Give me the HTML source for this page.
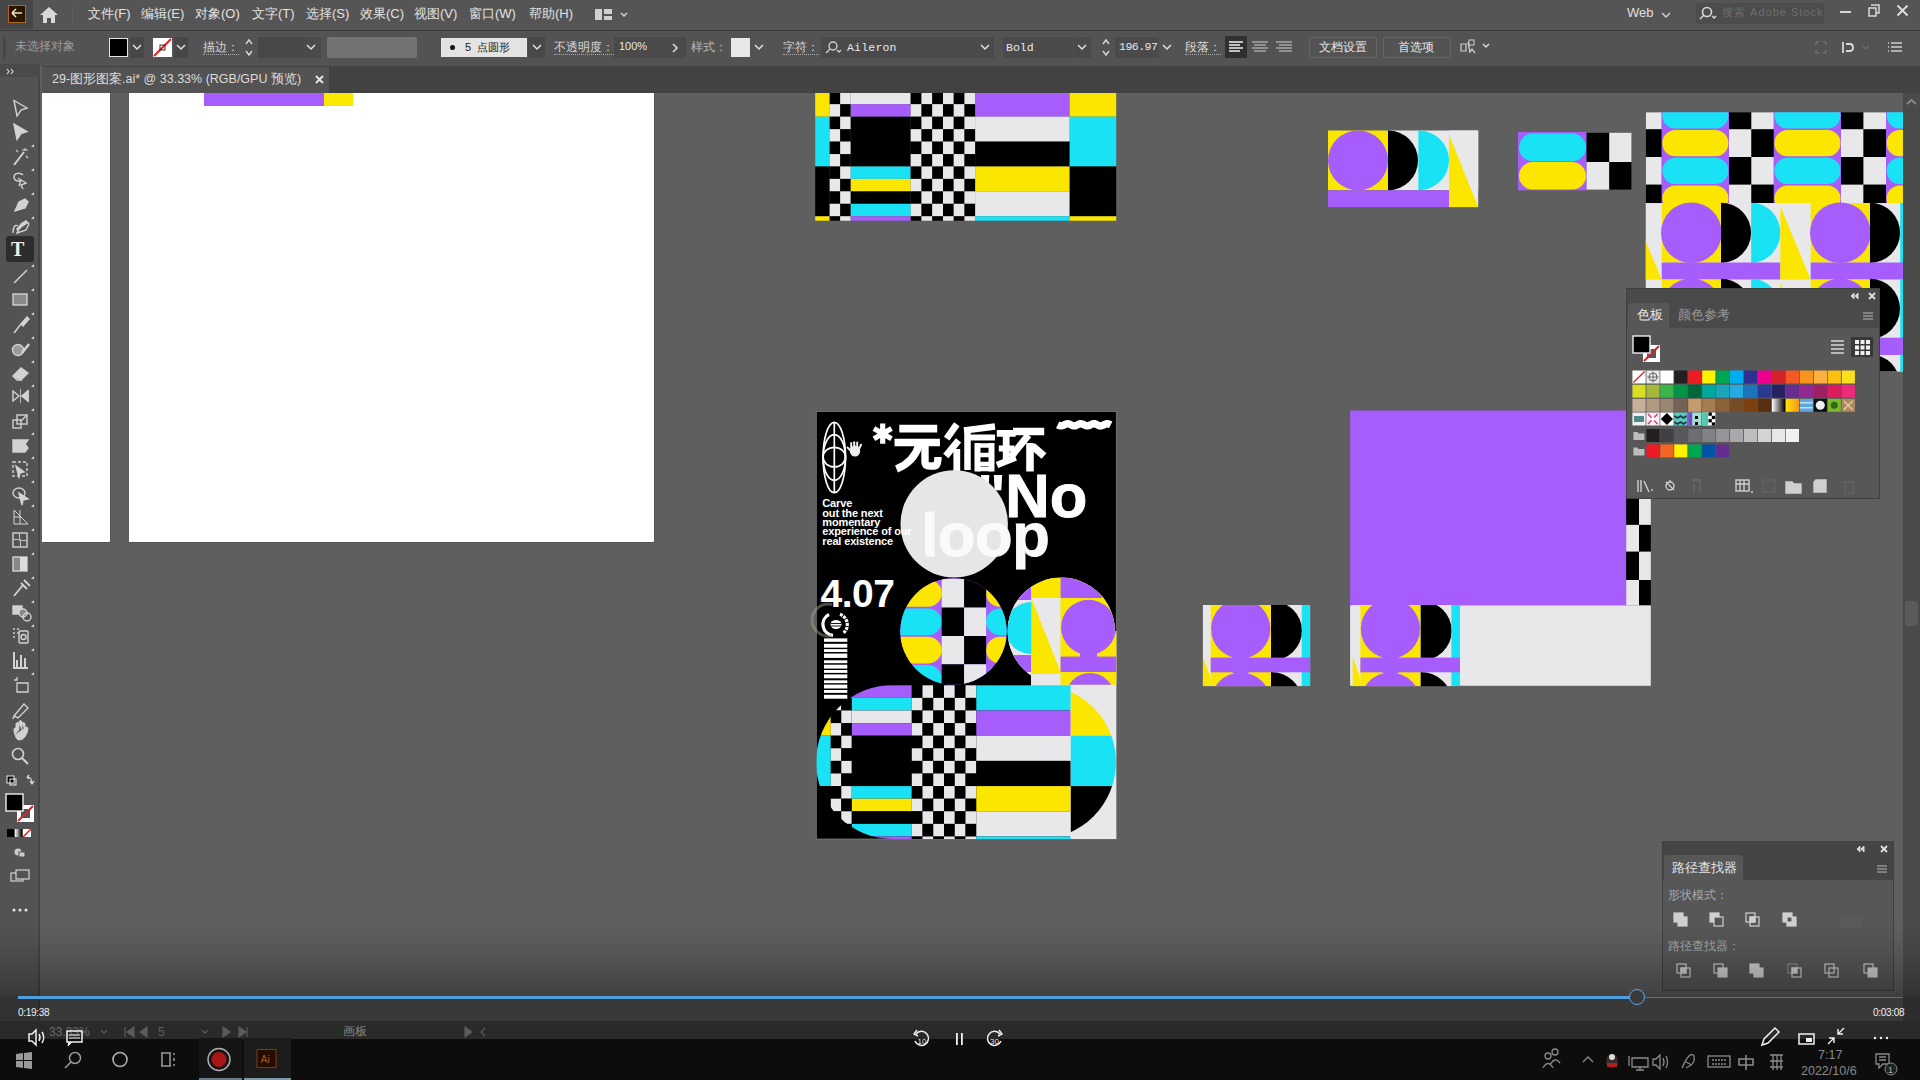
<!DOCTYPE html>
<html><head><meta charset="utf-8">
<style>
*{margin:0;padding:0;box-sizing:border-box}
html,body{width:1920px;height:1080px;overflow:hidden;background:#5f5f5f;font-family:"Liberation Sans",sans-serif;color:#d6d6d6}
.a{position:absolute}
.t{position:absolute;white-space:nowrap;line-height:1}
svg{position:absolute;left:0;top:0}
</style></head><body>
<!-- canvas artboards -->
<div class="a" style="left:42px;top:93px;width:68px;height:449px;background:#fff;box-shadow:1px 1px 0 #525252"></div>
<div class="a" style="left:129px;top:93px;width:525px;height:449px;background:#fff;box-shadow:1px 1px 0 #525252"></div>
<div class="a" style="left:204px;top:93px;width:120px;height:13px;background:#a65dfb"></div>
<div class="a" style="left:324px;top:93px;width:29px;height:13px;background:#fbe800"></div>

<!-- ART -->
<svg width="1920" height="1080" viewBox="0 0 1920 1080" id="art">
<defs>
<clipPath id="posterclip"><rect x="816.3" y="411.5" width="300" height="427.5"/></clipPath>
<clipPath id="pl"><circle cx="893" cy="762" r="77"/><rect x="893" y="600" width="300" height="260"/></clipPath>
<clipPath id="pr"><circle cx="1039" cy="762" r="77"/></clipPath>
<clipPath id="lc"><circle cx="953.5" cy="631.5" r="53.2"/></clipPath>
<clipPath id="rc"><circle cx="1061.3" cy="631.2" r="53.6"/><rect x="1061.3" y="631.2" width="56" height="53.6"/></clipPath>
<clipPath id="artC"><rect x="1645.8" y="112.2" width="257.3" height="259.3"/></clipPath>
<clipPath id="t1"><rect x="1202.7" y="605.0" width="107.6" height="81.2"/></clipPath>
<clipPath id="t2"><rect x="1352.4" y="605.0" width="107.6" height="81.2"/></clipPath>
</defs>
<g>
<rect x="815.2" y="66.9" width="14.5" height="24.9" fill="#000"/>
<rect x="815.2" y="91.8" width="14.5" height="24.9" fill="#fbe600"/>
<rect x="815.2" y="116.7" width="14.5" height="49.8" fill="#18e2f4"/>
<rect x="815.2" y="166.5" width="14.5" height="49.8" fill="#000"/>
<rect x="815.2" y="216.3" width="14.5" height="4.4" fill="#fbe600"/>
<rect x="850.5" y="66.9" width="60.2" height="12.5" fill="#a65dfb"/>
<rect x="850.5" y="79.4" width="60.2" height="12.5" fill="#18e2f4"/>
<rect x="850.5" y="91.8" width="60.2" height="12.4" fill="#e8e8ea"/>
<rect x="850.5" y="104.2" width="60.2" height="12.5" fill="#a65dfb"/>
<rect x="850.5" y="116.7" width="60.2" height="49.8" fill="#000"/>
<rect x="850.5" y="166.5" width="60.2" height="12.4" fill="#18e2f4"/>
<rect x="850.5" y="178.9" width="60.2" height="12.5" fill="#fbe600"/>
<rect x="850.5" y="191.4" width="60.2" height="12.4" fill="#000"/>
<rect x="850.5" y="203.8" width="60.2" height="12.4" fill="#18e2f4"/>
<rect x="850.5" y="216.3" width="60.2" height="4.4" fill="#a65dfb"/>
<rect x="829.7" y="66.9" width="10.5" height="12.5" fill="#000"/>
<rect x="840.2" y="66.9" width="10.3" height="12.5" fill="#e8e8ea"/>
<rect x="829.7" y="79.4" width="10.5" height="12.5" fill="#e8e8ea"/>
<rect x="840.2" y="79.4" width="10.3" height="12.5" fill="#000"/>
<rect x="829.7" y="91.8" width="10.5" height="12.4" fill="#000"/>
<rect x="840.2" y="91.8" width="10.3" height="12.4" fill="#e8e8ea"/>
<rect x="829.7" y="104.2" width="10.5" height="12.5" fill="#e8e8ea"/>
<rect x="840.2" y="104.2" width="10.3" height="12.5" fill="#000"/>
<rect x="829.7" y="116.7" width="10.5" height="12.5" fill="#000"/>
<rect x="840.2" y="116.7" width="10.3" height="12.5" fill="#e8e8ea"/>
<rect x="829.7" y="129.2" width="10.5" height="12.4" fill="#e8e8ea"/>
<rect x="840.2" y="129.2" width="10.3" height="12.4" fill="#000"/>
<rect x="829.7" y="141.6" width="10.5" height="12.5" fill="#000"/>
<rect x="840.2" y="141.6" width="10.3" height="12.5" fill="#e8e8ea"/>
<rect x="829.7" y="154.1" width="10.5" height="12.4" fill="#e8e8ea"/>
<rect x="840.2" y="154.1" width="10.3" height="12.4" fill="#000"/>
<rect x="829.7" y="166.5" width="10.5" height="12.4" fill="#000"/>
<rect x="840.2" y="166.5" width="10.3" height="12.4" fill="#e8e8ea"/>
<rect x="829.7" y="178.9" width="10.5" height="12.5" fill="#e8e8ea"/>
<rect x="840.2" y="178.9" width="10.3" height="12.5" fill="#000"/>
<rect x="829.7" y="191.4" width="10.5" height="12.4" fill="#000"/>
<rect x="840.2" y="191.4" width="10.3" height="12.4" fill="#e8e8ea"/>
<rect x="829.7" y="203.8" width="10.5" height="12.4" fill="#e8e8ea"/>
<rect x="840.2" y="203.8" width="10.3" height="12.4" fill="#000"/>
<rect x="829.7" y="216.3" width="10.5" height="4.4" fill="#000"/>
<rect x="840.2" y="216.3" width="10.3" height="4.4" fill="#e8e8ea"/>
</g>
<rect x="910.7" y="66.9" width="10.8" height="12.5" fill="#000"/>
<rect x="921.5" y="66.9" width="10.8" height="12.5" fill="#e8e8ea"/>
<rect x="932.2" y="66.9" width="10.8" height="12.5" fill="#000"/>
<rect x="943.0" y="66.9" width="10.8" height="12.5" fill="#e8e8ea"/>
<rect x="953.7" y="66.9" width="10.8" height="12.5" fill="#000"/>
<rect x="964.5" y="66.9" width="10.8" height="12.5" fill="#e8e8ea"/>
<rect x="910.7" y="79.4" width="10.8" height="12.5" fill="#e8e8ea"/>
<rect x="921.5" y="79.4" width="10.8" height="12.5" fill="#000"/>
<rect x="932.2" y="79.4" width="10.8" height="12.5" fill="#e8e8ea"/>
<rect x="943.0" y="79.4" width="10.8" height="12.5" fill="#000"/>
<rect x="953.7" y="79.4" width="10.8" height="12.5" fill="#e8e8ea"/>
<rect x="964.5" y="79.4" width="10.8" height="12.5" fill="#000"/>
<rect x="910.7" y="91.8" width="10.8" height="12.4" fill="#000"/>
<rect x="921.5" y="91.8" width="10.8" height="12.4" fill="#e8e8ea"/>
<rect x="932.2" y="91.8" width="10.8" height="12.4" fill="#000"/>
<rect x="943.0" y="91.8" width="10.8" height="12.4" fill="#e8e8ea"/>
<rect x="953.7" y="91.8" width="10.8" height="12.4" fill="#000"/>
<rect x="964.5" y="91.8" width="10.8" height="12.4" fill="#e8e8ea"/>
<rect x="910.7" y="104.2" width="10.8" height="12.5" fill="#e8e8ea"/>
<rect x="921.5" y="104.2" width="10.8" height="12.5" fill="#000"/>
<rect x="932.2" y="104.2" width="10.8" height="12.5" fill="#e8e8ea"/>
<rect x="943.0" y="104.2" width="10.8" height="12.5" fill="#000"/>
<rect x="953.7" y="104.2" width="10.8" height="12.5" fill="#e8e8ea"/>
<rect x="964.5" y="104.2" width="10.8" height="12.5" fill="#000"/>
<rect x="910.7" y="116.7" width="10.8" height="12.5" fill="#000"/>
<rect x="921.5" y="116.7" width="10.8" height="12.5" fill="#e8e8ea"/>
<rect x="932.2" y="116.7" width="10.8" height="12.5" fill="#000"/>
<rect x="943.0" y="116.7" width="10.8" height="12.5" fill="#e8e8ea"/>
<rect x="953.7" y="116.7" width="10.8" height="12.5" fill="#000"/>
<rect x="964.5" y="116.7" width="10.8" height="12.5" fill="#e8e8ea"/>
<rect x="910.7" y="129.2" width="10.8" height="12.4" fill="#e8e8ea"/>
<rect x="921.5" y="129.2" width="10.8" height="12.4" fill="#000"/>
<rect x="932.2" y="129.2" width="10.8" height="12.4" fill="#e8e8ea"/>
<rect x="943.0" y="129.2" width="10.8" height="12.4" fill="#000"/>
<rect x="953.7" y="129.2" width="10.8" height="12.4" fill="#e8e8ea"/>
<rect x="964.5" y="129.2" width="10.8" height="12.4" fill="#000"/>
<rect x="910.7" y="141.6" width="10.8" height="12.5" fill="#000"/>
<rect x="921.5" y="141.6" width="10.8" height="12.5" fill="#e8e8ea"/>
<rect x="932.2" y="141.6" width="10.8" height="12.5" fill="#000"/>
<rect x="943.0" y="141.6" width="10.8" height="12.5" fill="#e8e8ea"/>
<rect x="953.7" y="141.6" width="10.8" height="12.5" fill="#000"/>
<rect x="964.5" y="141.6" width="10.8" height="12.5" fill="#e8e8ea"/>
<rect x="910.7" y="154.1" width="10.8" height="12.4" fill="#e8e8ea"/>
<rect x="921.5" y="154.1" width="10.8" height="12.4" fill="#000"/>
<rect x="932.2" y="154.1" width="10.8" height="12.4" fill="#e8e8ea"/>
<rect x="943.0" y="154.1" width="10.8" height="12.4" fill="#000"/>
<rect x="953.7" y="154.1" width="10.8" height="12.4" fill="#e8e8ea"/>
<rect x="964.5" y="154.1" width="10.8" height="12.4" fill="#000"/>
<rect x="910.7" y="166.5" width="10.8" height="12.4" fill="#000"/>
<rect x="921.5" y="166.5" width="10.8" height="12.4" fill="#e8e8ea"/>
<rect x="932.2" y="166.5" width="10.8" height="12.4" fill="#000"/>
<rect x="943.0" y="166.5" width="10.8" height="12.4" fill="#e8e8ea"/>
<rect x="953.7" y="166.5" width="10.8" height="12.4" fill="#000"/>
<rect x="964.5" y="166.5" width="10.8" height="12.4" fill="#e8e8ea"/>
<rect x="910.7" y="178.9" width="10.8" height="12.5" fill="#e8e8ea"/>
<rect x="921.5" y="178.9" width="10.8" height="12.5" fill="#000"/>
<rect x="932.2" y="178.9" width="10.8" height="12.5" fill="#e8e8ea"/>
<rect x="943.0" y="178.9" width="10.8" height="12.5" fill="#000"/>
<rect x="953.7" y="178.9" width="10.8" height="12.5" fill="#e8e8ea"/>
<rect x="964.5" y="178.9" width="10.8" height="12.5" fill="#000"/>
<rect x="910.7" y="191.4" width="10.8" height="12.4" fill="#000"/>
<rect x="921.5" y="191.4" width="10.8" height="12.4" fill="#e8e8ea"/>
<rect x="932.2" y="191.4" width="10.8" height="12.4" fill="#000"/>
<rect x="943.0" y="191.4" width="10.8" height="12.4" fill="#e8e8ea"/>
<rect x="953.7" y="191.4" width="10.8" height="12.4" fill="#000"/>
<rect x="964.5" y="191.4" width="10.8" height="12.4" fill="#e8e8ea"/>
<rect x="910.7" y="203.8" width="10.8" height="12.4" fill="#e8e8ea"/>
<rect x="921.5" y="203.8" width="10.8" height="12.4" fill="#000"/>
<rect x="932.2" y="203.8" width="10.8" height="12.4" fill="#e8e8ea"/>
<rect x="943.0" y="203.8" width="10.8" height="12.4" fill="#000"/>
<rect x="953.7" y="203.8" width="10.8" height="12.4" fill="#e8e8ea"/>
<rect x="964.5" y="203.8" width="10.8" height="12.4" fill="#000"/>
<rect x="910.7" y="216.3" width="10.8" height="4.4" fill="#000"/>
<rect x="921.5" y="216.3" width="10.8" height="4.4" fill="#e8e8ea"/>
<rect x="932.2" y="216.3" width="10.8" height="4.4" fill="#000"/>
<rect x="943.0" y="216.3" width="10.8" height="4.4" fill="#e8e8ea"/>
<rect x="953.7" y="216.3" width="10.8" height="4.4" fill="#000"/>
<rect x="964.5" y="216.3" width="10.8" height="4.4" fill="#e8e8ea"/>
<rect x="975.2" y="66.9" width="94.5" height="24.9" fill="#18e2f4"/>
<rect x="975.2" y="91.8" width="94.5" height="24.9" fill="#a65dfb"/>
<rect x="975.2" y="116.7" width="94.5" height="24.9" fill="#e8e8ea"/>
<rect x="975.2" y="141.6" width="94.5" height="24.9" fill="#000"/>
<rect x="975.2" y="166.5" width="94.5" height="24.9" fill="#fbe600"/>
<rect x="975.2" y="191.4" width="94.5" height="24.9" fill="#e8e8ea"/>
<rect x="975.2" y="216.3" width="94.5" height="4.4" fill="#18e2f4"/>
<g>
<rect x="1069.7" y="66.9" width="46.5" height="49.8" fill="#fbe600"/>
<rect x="1069.7" y="116.7" width="46.5" height="49.8" fill="#18e2f4"/>
<rect x="1069.7" y="166.5" width="46.5" height="49.8" fill="#000"/>
<rect x="1069.7" y="216.3" width="46.5" height="4.4" fill="#fbe600"/>
</g>
<rect x="816.3" y="411.5" width="300.0" height="427.5" fill="#000" stroke="#7a7a7a" stroke-width="0.8"/>
<g clip-path="url(#posterclip)">
<rect x="1031.0" y="674.0" width="85.3" height="12.0" fill="#e8e8ea"/>
<rect x="1070.0" y="674.0" width="46.3" height="165.0" fill="#e8e8ea"/>
<g clip-path="url(#pl)">
<rect x="816.3" y="685.3" width="14.5" height="25.2" fill="#000"/>
<rect x="816.3" y="710.5" width="14.5" height="25.2" fill="#fbe600"/>
<rect x="816.3" y="735.7" width="14.5" height="50.4" fill="#18e2f4"/>
<rect x="816.3" y="786.1" width="14.5" height="50.4" fill="#000"/>
<rect x="816.3" y="836.5" width="14.5" height="2.5" fill="#fbe600"/>
<rect x="851.6" y="685.3" width="60.2" height="12.6" fill="#a65dfb"/>
<rect x="851.6" y="697.9" width="60.2" height="12.6" fill="#18e2f4"/>
<rect x="851.6" y="710.5" width="60.2" height="12.6" fill="#e8e8ea"/>
<rect x="851.6" y="723.1" width="60.2" height="12.6" fill="#a65dfb"/>
<rect x="851.6" y="735.7" width="60.2" height="50.4" fill="#000"/>
<rect x="851.6" y="786.1" width="60.2" height="12.6" fill="#18e2f4"/>
<rect x="851.6" y="798.7" width="60.2" height="12.6" fill="#fbe600"/>
<rect x="851.6" y="811.3" width="60.2" height="12.6" fill="#000"/>
<rect x="851.6" y="823.9" width="60.2" height="12.6" fill="#18e2f4"/>
<rect x="851.6" y="836.5" width="60.2" height="2.5" fill="#a65dfb"/>
<rect x="830.8" y="685.3" width="10.5" height="12.6" fill="#000"/>
<rect x="841.3" y="685.3" width="10.3" height="12.6" fill="#e8e8ea"/>
<rect x="830.8" y="697.9" width="10.5" height="12.6" fill="#e8e8ea"/>
<rect x="841.3" y="697.9" width="10.3" height="12.6" fill="#000"/>
<rect x="830.8" y="710.5" width="10.5" height="12.6" fill="#000"/>
<rect x="841.3" y="710.5" width="10.3" height="12.6" fill="#e8e8ea"/>
<rect x="830.8" y="723.1" width="10.5" height="12.6" fill="#e8e8ea"/>
<rect x="841.3" y="723.1" width="10.3" height="12.6" fill="#000"/>
<rect x="830.8" y="735.7" width="10.5" height="12.6" fill="#000"/>
<rect x="841.3" y="735.7" width="10.3" height="12.6" fill="#e8e8ea"/>
<rect x="830.8" y="748.3" width="10.5" height="12.6" fill="#e8e8ea"/>
<rect x="841.3" y="748.3" width="10.3" height="12.6" fill="#000"/>
<rect x="830.8" y="760.9" width="10.5" height="12.6" fill="#000"/>
<rect x="841.3" y="760.9" width="10.3" height="12.6" fill="#e8e8ea"/>
<rect x="830.8" y="773.5" width="10.5" height="12.6" fill="#e8e8ea"/>
<rect x="841.3" y="773.5" width="10.3" height="12.6" fill="#000"/>
<rect x="830.8" y="786.1" width="10.5" height="12.6" fill="#000"/>
<rect x="841.3" y="786.1" width="10.3" height="12.6" fill="#e8e8ea"/>
<rect x="830.8" y="798.7" width="10.5" height="12.6" fill="#e8e8ea"/>
<rect x="841.3" y="798.7" width="10.3" height="12.6" fill="#000"/>
<rect x="830.8" y="811.3" width="10.5" height="12.6" fill="#000"/>
<rect x="841.3" y="811.3" width="10.3" height="12.6" fill="#e8e8ea"/>
<rect x="830.8" y="823.9" width="10.5" height="12.6" fill="#e8e8ea"/>
<rect x="841.3" y="823.9" width="10.3" height="12.6" fill="#000"/>
<rect x="830.8" y="836.5" width="10.5" height="2.5" fill="#000"/>
<rect x="841.3" y="836.5" width="10.3" height="2.5" fill="#e8e8ea"/>
</g>
<rect x="911.8" y="685.3" width="10.8" height="12.6" fill="#000"/>
<rect x="922.5" y="685.3" width="10.8" height="12.6" fill="#e8e8ea"/>
<rect x="933.3" y="685.3" width="10.8" height="12.6" fill="#000"/>
<rect x="944.0" y="685.3" width="10.8" height="12.6" fill="#e8e8ea"/>
<rect x="954.8" y="685.3" width="10.8" height="12.6" fill="#000"/>
<rect x="965.5" y="685.3" width="10.8" height="12.6" fill="#e8e8ea"/>
<rect x="911.8" y="697.9" width="10.8" height="12.6" fill="#e8e8ea"/>
<rect x="922.5" y="697.9" width="10.8" height="12.6" fill="#000"/>
<rect x="933.3" y="697.9" width="10.8" height="12.6" fill="#e8e8ea"/>
<rect x="944.0" y="697.9" width="10.8" height="12.6" fill="#000"/>
<rect x="954.8" y="697.9" width="10.8" height="12.6" fill="#e8e8ea"/>
<rect x="965.5" y="697.9" width="10.8" height="12.6" fill="#000"/>
<rect x="911.8" y="710.5" width="10.8" height="12.6" fill="#000"/>
<rect x="922.5" y="710.5" width="10.8" height="12.6" fill="#e8e8ea"/>
<rect x="933.3" y="710.5" width="10.8" height="12.6" fill="#000"/>
<rect x="944.0" y="710.5" width="10.8" height="12.6" fill="#e8e8ea"/>
<rect x="954.8" y="710.5" width="10.8" height="12.6" fill="#000"/>
<rect x="965.5" y="710.5" width="10.8" height="12.6" fill="#e8e8ea"/>
<rect x="911.8" y="723.1" width="10.8" height="12.6" fill="#e8e8ea"/>
<rect x="922.5" y="723.1" width="10.8" height="12.6" fill="#000"/>
<rect x="933.3" y="723.1" width="10.8" height="12.6" fill="#e8e8ea"/>
<rect x="944.0" y="723.1" width="10.8" height="12.6" fill="#000"/>
<rect x="954.8" y="723.1" width="10.8" height="12.6" fill="#e8e8ea"/>
<rect x="965.5" y="723.1" width="10.8" height="12.6" fill="#000"/>
<rect x="911.8" y="735.7" width="10.8" height="12.6" fill="#000"/>
<rect x="922.5" y="735.7" width="10.8" height="12.6" fill="#e8e8ea"/>
<rect x="933.3" y="735.7" width="10.8" height="12.6" fill="#000"/>
<rect x="944.0" y="735.7" width="10.8" height="12.6" fill="#e8e8ea"/>
<rect x="954.8" y="735.7" width="10.8" height="12.6" fill="#000"/>
<rect x="965.5" y="735.7" width="10.8" height="12.6" fill="#e8e8ea"/>
<rect x="911.8" y="748.3" width="10.8" height="12.6" fill="#e8e8ea"/>
<rect x="922.5" y="748.3" width="10.8" height="12.6" fill="#000"/>
<rect x="933.3" y="748.3" width="10.8" height="12.6" fill="#e8e8ea"/>
<rect x="944.0" y="748.3" width="10.8" height="12.6" fill="#000"/>
<rect x="954.8" y="748.3" width="10.8" height="12.6" fill="#e8e8ea"/>
<rect x="965.5" y="748.3" width="10.8" height="12.6" fill="#000"/>
<rect x="911.8" y="760.9" width="10.8" height="12.6" fill="#000"/>
<rect x="922.5" y="760.9" width="10.8" height="12.6" fill="#e8e8ea"/>
<rect x="933.3" y="760.9" width="10.8" height="12.6" fill="#000"/>
<rect x="944.0" y="760.9" width="10.8" height="12.6" fill="#e8e8ea"/>
<rect x="954.8" y="760.9" width="10.8" height="12.6" fill="#000"/>
<rect x="965.5" y="760.9" width="10.8" height="12.6" fill="#e8e8ea"/>
<rect x="911.8" y="773.5" width="10.8" height="12.6" fill="#e8e8ea"/>
<rect x="922.5" y="773.5" width="10.8" height="12.6" fill="#000"/>
<rect x="933.3" y="773.5" width="10.8" height="12.6" fill="#e8e8ea"/>
<rect x="944.0" y="773.5" width="10.8" height="12.6" fill="#000"/>
<rect x="954.8" y="773.5" width="10.8" height="12.6" fill="#e8e8ea"/>
<rect x="965.5" y="773.5" width="10.8" height="12.6" fill="#000"/>
<rect x="911.8" y="786.1" width="10.8" height="12.6" fill="#000"/>
<rect x="922.5" y="786.1" width="10.8" height="12.6" fill="#e8e8ea"/>
<rect x="933.3" y="786.1" width="10.8" height="12.6" fill="#000"/>
<rect x="944.0" y="786.1" width="10.8" height="12.6" fill="#e8e8ea"/>
<rect x="954.8" y="786.1" width="10.8" height="12.6" fill="#000"/>
<rect x="965.5" y="786.1" width="10.8" height="12.6" fill="#e8e8ea"/>
<rect x="911.8" y="798.7" width="10.8" height="12.6" fill="#e8e8ea"/>
<rect x="922.5" y="798.7" width="10.8" height="12.6" fill="#000"/>
<rect x="933.3" y="798.7" width="10.8" height="12.6" fill="#e8e8ea"/>
<rect x="944.0" y="798.7" width="10.8" height="12.6" fill="#000"/>
<rect x="954.8" y="798.7" width="10.8" height="12.6" fill="#e8e8ea"/>
<rect x="965.5" y="798.7" width="10.8" height="12.6" fill="#000"/>
<rect x="911.8" y="811.3" width="10.8" height="12.6" fill="#000"/>
<rect x="922.5" y="811.3" width="10.8" height="12.6" fill="#e8e8ea"/>
<rect x="933.3" y="811.3" width="10.8" height="12.6" fill="#000"/>
<rect x="944.0" y="811.3" width="10.8" height="12.6" fill="#e8e8ea"/>
<rect x="954.8" y="811.3" width="10.8" height="12.6" fill="#000"/>
<rect x="965.5" y="811.3" width="10.8" height="12.6" fill="#e8e8ea"/>
<rect x="911.8" y="823.9" width="10.8" height="12.6" fill="#e8e8ea"/>
<rect x="922.5" y="823.9" width="10.8" height="12.6" fill="#000"/>
<rect x="933.3" y="823.9" width="10.8" height="12.6" fill="#e8e8ea"/>
<rect x="944.0" y="823.9" width="10.8" height="12.6" fill="#000"/>
<rect x="954.8" y="823.9" width="10.8" height="12.6" fill="#e8e8ea"/>
<rect x="965.5" y="823.9" width="10.8" height="12.6" fill="#000"/>
<rect x="911.8" y="836.5" width="10.8" height="2.5" fill="#000"/>
<rect x="922.5" y="836.5" width="10.8" height="2.5" fill="#e8e8ea"/>
<rect x="933.3" y="836.5" width="10.8" height="2.5" fill="#000"/>
<rect x="944.0" y="836.5" width="10.8" height="2.5" fill="#e8e8ea"/>
<rect x="954.8" y="836.5" width="10.8" height="2.5" fill="#000"/>
<rect x="965.5" y="836.5" width="10.8" height="2.5" fill="#e8e8ea"/>
<rect x="976.3" y="685.3" width="94.5" height="25.2" fill="#18e2f4"/>
<rect x="976.3" y="710.5" width="94.5" height="25.2" fill="#a65dfb"/>
<rect x="976.3" y="735.7" width="94.5" height="25.2" fill="#e8e8ea"/>
<rect x="976.3" y="760.9" width="94.5" height="25.2" fill="#000"/>
<rect x="976.3" y="786.1" width="94.5" height="25.2" fill="#fbe600"/>
<rect x="976.3" y="811.3" width="94.5" height="25.2" fill="#e8e8ea"/>
<rect x="976.3" y="836.5" width="94.5" height="2.5" fill="#18e2f4"/>
<rect x="1070.8" y="685.3" width="46.0" height="153.7" fill="#e8e8ea"/>
<g clip-path="url(#pr)">
<rect x="1070.8" y="685.3" width="46.5" height="50.4" fill="#fbe600"/>
<rect x="1070.8" y="735.7" width="46.5" height="50.4" fill="#18e2f4"/>
<rect x="1070.8" y="786.1" width="46.5" height="50.4" fill="#000"/>
<rect x="1070.8" y="836.5" width="46.5" height="2.5" fill="#fbe600"/>
</g>
<g clip-path="url(#lc)">
<rect x="898.0" y="576.0" width="112.0" height="114.0" fill="#a65dfb"/>
<rect x="880" y="579.5" width="61.7" height="27.3" rx="14" fill="#fbe600"/>
<rect x="986.1" y="579.5" width="45" height="27.3" rx="14" fill="#fbe600"/>
<rect x="880" y="608.4" width="61.7" height="26.8" rx="14" fill="#18e2f4"/>
<rect x="986.1" y="608.4" width="45" height="26.8" rx="14" fill="#18e2f4"/>
<rect x="880" y="636.8" width="61.7" height="26.7" rx="14" fill="#fbe600"/>
<rect x="986.1" y="636.8" width="45" height="26.7" rx="14" fill="#fbe600"/>
<rect x="880" y="665.1" width="61.7" height="26.6" rx="14" fill="#18e2f4"/>
<rect x="986.1" y="665.1" width="45" height="26.6" rx="14" fill="#18e2f4"/>
<rect x="941.7" y="578.7" width="22.4" height="28.9" fill="#e8e8ea"/>
<rect x="964.1" y="578.7" width="22.0" height="28.9" fill="#000"/>
<rect x="941.7" y="607.6" width="22.4" height="28.4" fill="#000"/>
<rect x="964.1" y="607.6" width="22.0" height="28.4" fill="#e8e8ea"/>
<rect x="941.7" y="636.0" width="22.4" height="28.3" fill="#e8e8ea"/>
<rect x="964.1" y="636.0" width="22.0" height="28.3" fill="#000"/>
<rect x="941.7" y="664.3" width="22.4" height="28.2" fill="#000"/>
<rect x="964.1" y="664.3" width="22.0" height="28.2" fill="#e8e8ea"/>
</g>
<g clip-path="url(#rc)">
<rect x="1005.0" y="575.0" width="112.0" height="115.0" fill="#e8e8ea"/>
<rect x="1005.0" y="575.0" width="26.3" height="115.0" fill="#e8e8ea"/>
<rect x="1012.0" y="574.0" width="19.3" height="26.0" fill="#a65dfb"/>
<rect x="1012.0" y="655.0" width="19.3" height="17.0" fill="#a65dfb"/>
<circle cx="1031.3" cy="628.0" r="26.0" fill="#18e2f4"/>
<rect x="1031.3" y="578.0" width="29.3" height="96.0" fill="#fbe600"/>
<polygon points="1031.3,598.0 1060.6,598.0 1060.6,672.0" fill="#e8e8ea"/>
<rect x="1060.6" y="578.0" width="56.4" height="112.0" fill="#fbe600"/>
<rect x="1102.0" y="575.0" width="15.0" height="23.0" fill="#e8e8ea"/>
<rect x="1060.6" y="575.0" width="41.4" height="23.0" fill="#a65dfb"/>
<circle cx="1088.6" cy="627.3" r="27.5" fill="#a65dfb"/>
<rect x="1080.0" y="645.0" width="17.0" height="15.0" fill="#a65dfb"/>
<rect x="1060.6" y="656.6" width="56.4" height="15.4" fill="#a65dfb"/>
<circle cx="1090.0" cy="697.5" r="24.5" fill="#a65dfb"/>
</g>
<g stroke="#fff" stroke-width="5.2"><path d="M882.7 423.5V443.8M873.9 428.5L891.5 438.7M873.9 438.7L891.5 428.5"/></g>
<path d="M899.3 428.6H937.2" fill="none" stroke="#fff" stroke-width="7.6" stroke-linecap="butt" stroke-linejoin="miter"/>
<path d="M894.5 442.5H939.9" fill="none" stroke="#fff" stroke-width="7.6" stroke-linecap="butt" stroke-linejoin="miter"/>
<path d="M919 445C916 455 909 464 896.5 469" fill="none" stroke="#fff" stroke-width="7.6" stroke-linecap="butt" stroke-linejoin="miter"/>
<path d="M925 445V462Q925 466 930 466H934Q938 466 938 457" fill="none" stroke="#fff" stroke-width="7.4" stroke-linecap="butt" stroke-linejoin="miter"/>
<path d="M956.8 424.2L946.7 438.6" fill="none" stroke="#fff" stroke-width="6.8" stroke-linecap="butt" stroke-linejoin="miter"/>
<path d="M958.5 440.4L945.8 456" fill="none" stroke="#fff" stroke-width="6.8" stroke-linecap="butt" stroke-linejoin="miter"/>
<path d="M956.8 449V471" fill="none" stroke="#fff" stroke-width="6.8" stroke-linecap="butt" stroke-linejoin="miter"/>
<path d="M964 430.5L995 426.5" fill="none" stroke="#fff" stroke-width="6.5" stroke-linecap="butt" stroke-linejoin="miter"/>
<path d="M967.5 430V470" fill="none" stroke="#fff" stroke-width="6.5" stroke-linecap="butt" stroke-linejoin="miter"/>
<path d="M970 437.5H995" fill="none" stroke="#fff" stroke-width="6" stroke-linecap="butt" stroke-linejoin="miter"/>
<path d="M977.5 443V471.6M991.5 443V471.6" fill="none" stroke="#fff" stroke-width="6" stroke-linecap="butt" stroke-linejoin="miter"/>
<path d="M977.5 445.5H991.5M977.5 455H991.5M977.5 464H991.5M977.5 469H991.5" fill="none" stroke="#fff" stroke-width="4.5" stroke-linecap="butt" stroke-linejoin="miter"/>
<path d="M996.8 433.3H1015.7" fill="none" stroke="#fff" stroke-width="6.8" stroke-linecap="butt" stroke-linejoin="miter"/>
<path d="M998.8 448.6H1014.4" fill="none" stroke="#fff" stroke-width="6" stroke-linecap="butt" stroke-linejoin="miter"/>
<path d="M1006.2 433V461" fill="none" stroke="#fff" stroke-width="6.8" stroke-linecap="butt" stroke-linejoin="miter"/>
<path d="M997 465L1015.7 457.5" fill="none" stroke="#fff" stroke-width="6.5" stroke-linecap="butt" stroke-linejoin="miter"/>
<path d="M1013 431.6H1044.2" fill="none" stroke="#fff" stroke-width="7.5" stroke-linecap="butt" stroke-linejoin="miter"/>
<path d="M1028.5 435L1010.8 457" fill="none" stroke="#fff" stroke-width="7" stroke-linecap="butt" stroke-linejoin="miter"/>
<path d="M1030 443V471.6" fill="none" stroke="#fff" stroke-width="7.6" stroke-linecap="butt" stroke-linejoin="miter"/>
<path d="M1032.5 446L1044 456" fill="none" stroke="#fff" stroke-width="7.4" stroke-linecap="butt" stroke-linejoin="miter"/>
<path d="M1057.7 424.8L1057.7 424.80L1058.7 425.30L1059.7 425.70L1060.7 425.89L1061.7 425.84L1062.7 425.56L1063.7 425.11L1064.7 424.59L1065.7 424.12L1066.7 423.80L1067.7 423.70L1068.7 423.85L1069.7 424.21L1070.7 424.70L1071.7 425.21L1072.7 425.63L1073.7 425.87L1074.7 425.87L1075.7 425.63L1076.7 425.21L1077.7 424.70L1078.7 424.21L1079.7 423.85L1080.7 423.70L1081.7 423.80L1082.7 424.12L1083.7 424.59L1084.7 425.11L1085.7 425.56L1086.7 425.84L1087.7 425.89L1088.7 425.70L1089.7 425.30L1090.7 424.80L1091.7 424.30L1092.7 423.90L1093.7 423.71L1094.7 423.76L1095.7 424.04L1096.7 424.49L1097.7 425.01L1098.7 425.48L1099.7 425.80L1100.7 425.90L1101.7 425.75L1102.7 425.39L1103.7 424.90L1104.7 424.39L1105.7 423.97L1106.7 423.73L1107.7 423.73L1108.7 423.97L1109.7 424.39L1110.7 424.90" fill="none" stroke="#fff" stroke-width="7.4" stroke-linecap="butt" stroke-linejoin="miter"/>
<text x="1005.3" y="516.7" font-family="Liberation Sans" font-weight="bold" font-size="61.5" fill="#fff" stroke="#fff" stroke-width="0.9" letter-spacing="0">No</text>
<text x="977" y="516.7" font-family="Liberation Sans" font-weight="bold" font-size="61.5" fill="#fff">"</text>
<circle cx="954.2" cy="523.9" r="53.7" fill="#e6e6e6"/>
<text x="921.2" y="555.6" font-family="Liberation Sans" font-weight="bold" font-size="61.5" fill="#fafafa" stroke="#fafafa" stroke-width="0.9" letter-spacing="-0.4">loop</text>
<g fill="none" stroke="#fff" stroke-width="1.7"><ellipse cx="834.3" cy="457.5" rx="11.2" ry="35.2"/><line x1="834.3" y1="422.3" x2="834.3" y2="492.7"/><ellipse cx="834.3" cy="457.1" rx="11.2" ry="9.8"/><ellipse cx="834.3" cy="457.5" rx="11.2" ry="22.8"/></g>
<g fill="#eee"><ellipse cx="855" cy="451" rx="5.2" ry="5.5"/><rect x="850.2" y="442" width="2" height="8" rx="1"/><rect x="853.2" y="441.2" width="2" height="8" rx="1"/><rect x="856.2" y="441.6" width="2" height="8" rx="1"/><rect x="859" y="443.5" width="2" height="8" rx="1" transform="rotate(25 860 447)"/></g>
<path d="M847 447L852 452" stroke="#eee" stroke-width="2"/>
<text x="822.3" y="507.2" font-family="Liberation Sans" font-weight="bold" font-size="11" fill="#fff" letter-spacing="-0.15">Carve</text>
<text x="822.3" y="516.6" font-family="Liberation Sans" font-weight="bold" font-size="11" fill="#fff" letter-spacing="-0.15">out the next</text>
<text x="822.3" y="526.0" font-family="Liberation Sans" font-weight="bold" font-size="11" fill="#fff" letter-spacing="-0.15">momentary</text>
<text x="822.3" y="535.4" font-family="Liberation Sans" font-weight="bold" font-size="11" fill="#fff" letter-spacing="-0.15">experience of our</text>
<text x="822.3" y="544.8" font-family="Liberation Sans" font-weight="bold" font-size="11" fill="#fff" letter-spacing="-0.15">real existence</text>
<text x="820.5" y="607.2" font-family="Liberation Sans" font-weight="bold" font-size="39" fill="#fff" letter-spacing="-0.5">4.07</text>
<g fill="none" stroke="#fff" stroke-width="3.2"><path d="M829 614.5A11 11 0 0 0 833 635.3"/><path d="M840 614.3A11 11 0 0 1 843.5 633" stroke-dasharray="3 0.9"/></g>
<g fill="#fff"><ellipse cx="836" cy="624.5" rx="5.5" ry="4.5"/></g><path d="M831 623.5H841M831 626H841" stroke="#000" stroke-width="0.9"/>
<rect x="824.0" y="638.4" width="23.3" height="3.4" fill="#fff"/>
<rect x="824.0" y="643.8" width="23.3" height="3.9" fill="#fff"/>
<rect x="824.0" y="649.1" width="23.3" height="2.9" fill="#fff"/>
<rect x="824.0" y="653.5" width="23.3" height="4.4" fill="#fff"/>
<rect x="824.0" y="660.3" width="23.3" height="2.9" fill="#fff"/>
<rect x="824.0" y="664.7" width="23.3" height="3.9" fill="#fff"/>
<rect x="824.0" y="670.0" width="23.3" height="2.9" fill="#fff"/>
<rect x="824.0" y="674.4" width="23.3" height="3.9" fill="#fff"/>
<rect x="824.0" y="680.3" width="23.3" height="2.9" fill="#fff"/>
<rect x="824.0" y="684.6" width="23.3" height="3.9" fill="#fff"/>
<rect x="824.0" y="690.0" width="23.3" height="2.9" fill="#fff"/>
<rect x="824.0" y="694.8" width="23.3" height="3.9" fill="#fff"/>
</g>
<path d="M832 604.5A16 16 0 1 0 832 635.5" fill="none" stroke="#a8a88a" stroke-width="3" opacity="0.45"/>
<rect x="1388.0" y="130.5" width="90.2" height="59.8" fill="#e8e8ea"/>
<rect x="1328.0" y="130.5" width="60.0" height="59.8" fill="#fbe600"/>
<circle cx="1358.0" cy="160.4" r="30.0" fill="#a65dfb"/>
<path d="M1388 130.4A30 30 0 0 1 1388 190.4Z" fill="#000"/>
<path d="M1418.4 130.4A30.6 30 0 0 1 1418.4 190.4Z" fill="#18e2f4"/>
<rect x="1328.0" y="190.3" width="121.0" height="16.8" fill="#a65dfb"/>
<rect x="1449.0" y="130.5" width="29.2" height="76.6" fill="#e8e8ea"/>
<polygon points="1449.0,134.5 1478.2,207.1 1449.0,207.1" fill="#fbe600"/>
<rect x="1518.0" y="132.0" width="68.6" height="58.3" fill="#a65dfb"/>
<rect x="1519" y="133.6" width="67" height="27.6" rx="13.8" fill="#18e2f4"/>
<rect x="1519" y="162" width="67" height="27.6" rx="13.8" fill="#fbe600"/>
<rect x="1586.6" y="132.8" width="22.7" height="29.2" fill="#000"/>
<rect x="1609.3" y="132.8" width="22.1" height="29.2" fill="#e8e8ea"/>
<rect x="1586.6" y="162.0" width="22.7" height="27.6" fill="#e8e8ea"/>
<rect x="1609.3" y="162.0" width="22.1" height="27.6" fill="#000"/>
<g clip-path="url(#artC)">
<rect x="1645.8" y="112.2" width="15.9" height="17.1" fill="#e8e8ea"/>
<rect x="1645.8" y="129.3" width="15.9" height="27.7" fill="#000"/>
<rect x="1645.8" y="157.0" width="15.9" height="27.7" fill="#e8e8ea"/>
<rect x="1645.8" y="184.7" width="15.9" height="18.5" fill="#000"/>
<rect x="1661.7" y="112.2" width="67.3" height="91.0" fill="#a65dfb"/>
<rect x="1662.3" y="102.3" width="66.1" height="26.3" rx="13.2" fill="#18e2f4"/>
<rect x="1662.3" y="130.0" width="66.1" height="26.3" rx="13.2" fill="#fbe600"/>
<rect x="1662.3" y="157.7" width="66.1" height="26.3" rx="13.2" fill="#18e2f4"/>
<rect x="1662.3" y="185.4" width="66.1" height="26.3" rx="13.2" fill="#fbe600"/>
<rect x="1729.0" y="112.2" width="22.4" height="17.1" fill="#000"/>
<rect x="1729.0" y="129.3" width="22.4" height="27.7" fill="#e8e8ea"/>
<rect x="1729.0" y="157.0" width="22.4" height="27.7" fill="#000"/>
<rect x="1729.0" y="184.7" width="22.4" height="18.5" fill="#e8e8ea"/>
<rect x="1751.4" y="112.2" width="22.4" height="17.1" fill="#e8e8ea"/>
<rect x="1751.4" y="129.3" width="22.4" height="27.7" fill="#000"/>
<rect x="1751.4" y="157.0" width="22.4" height="27.7" fill="#e8e8ea"/>
<rect x="1751.4" y="184.7" width="22.4" height="18.5" fill="#000"/>
<rect x="1773.8" y="112.2" width="67.3" height="91.0" fill="#a65dfb"/>
<rect x="1774.4" y="102.3" width="66.1" height="26.3" rx="13.2" fill="#18e2f4"/>
<rect x="1774.4" y="130.0" width="66.1" height="26.3" rx="13.2" fill="#fbe600"/>
<rect x="1774.4" y="157.7" width="66.1" height="26.3" rx="13.2" fill="#18e2f4"/>
<rect x="1774.4" y="185.4" width="66.1" height="26.3" rx="13.2" fill="#fbe600"/>
<rect x="1841.0" y="112.2" width="22.5" height="17.1" fill="#000"/>
<rect x="1841.0" y="129.3" width="22.5" height="27.7" fill="#e8e8ea"/>
<rect x="1841.0" y="157.0" width="22.5" height="27.7" fill="#000"/>
<rect x="1841.0" y="184.7" width="22.5" height="18.5" fill="#e8e8ea"/>
<rect x="1863.5" y="112.2" width="22.5" height="17.1" fill="#e8e8ea"/>
<rect x="1863.5" y="129.3" width="22.5" height="27.7" fill="#000"/>
<rect x="1863.5" y="157.0" width="22.5" height="27.7" fill="#e8e8ea"/>
<rect x="1863.5" y="184.7" width="22.5" height="18.5" fill="#000"/>
<rect x="1886.0" y="112.2" width="67.3" height="91.0" fill="#a65dfb"/>
<rect x="1886.6" y="102.3" width="66.1" height="26.3" rx="13.2" fill="#18e2f4"/>
<rect x="1886.6" y="130.0" width="66.1" height="26.3" rx="13.2" fill="#fbe600"/>
<rect x="1886.6" y="157.7" width="66.1" height="26.3" rx="13.2" fill="#18e2f4"/>
<rect x="1886.6" y="185.4" width="66.1" height="26.3" rx="13.2" fill="#fbe600"/>
<rect x="1645.8" y="203.2" width="257.3" height="168.3" fill="#e8e8ea"/>
<rect x="1512.7" y="203.2" width="149.0" height="76.5" fill="#e8e8ea"/>
<rect x="1512.7" y="203.2" width="59.3" height="59.3" fill="#fbe600"/>
<circle cx="1542.3" cy="232.8" r="30.3" fill="#a65dfb"/>
<path d="M1572.0 202.8A30 30 0 0 1 1572.0 262.9Z" fill="#000"/>
<path d="M1602.2 202.8A29 30 0 0 1 1602.2 262.9Z" fill="#18e2f4"/>
<rect x="1512.7" y="262.5" width="118.7" height="17.2" fill="#a65dfb"/>
<polygon points="1631.4,206.2 1661.7,279.7 1631.4,279.7" fill="#fbe600"/>
<rect x="1661.7" y="203.2" width="149.0" height="76.5" fill="#e8e8ea"/>
<rect x="1661.7" y="203.2" width="59.3" height="59.3" fill="#fbe600"/>
<circle cx="1691.3" cy="232.8" r="30.3" fill="#a65dfb"/>
<path d="M1721.0 202.8A30 30 0 0 1 1721.0 262.9Z" fill="#000"/>
<path d="M1751.2 202.8A29 30 0 0 1 1751.2 262.9Z" fill="#18e2f4"/>
<rect x="1661.7" y="262.5" width="118.7" height="17.2" fill="#a65dfb"/>
<polygon points="1780.4,206.2 1810.7,279.7 1780.4,279.7" fill="#fbe600"/>
<rect x="1810.7" y="203.2" width="149.0" height="76.5" fill="#e8e8ea"/>
<rect x="1810.7" y="203.2" width="59.3" height="59.3" fill="#fbe600"/>
<circle cx="1840.3" cy="232.8" r="30.3" fill="#a65dfb"/>
<path d="M1870.0 202.8A30 30 0 0 1 1870.0 262.9Z" fill="#000"/>
<path d="M1900.2 202.8A29 30 0 0 1 1900.2 262.9Z" fill="#18e2f4"/>
<rect x="1810.7" y="262.5" width="118.7" height="17.2" fill="#a65dfb"/>
<polygon points="1929.4,206.2 1959.7,279.7 1929.4,279.7" fill="#fbe600"/>
<rect x="1512.7" y="279.7" width="149.0" height="75.3" fill="#e8e8ea"/>
<rect x="1512.7" y="279.7" width="59.3" height="58.0" fill="#fbe600"/>
<circle cx="1542.3" cy="308.7" r="30.3" fill="#a65dfb"/>
<path d="M1572.0 278.7A30 30 0 0 1 1572.0 338.7Z" fill="#000"/>
<path d="M1602.2 278.7A29 30 0 0 1 1602.2 338.7Z" fill="#18e2f4"/>
<rect x="1512.7" y="337.7" width="118.7" height="17.3" fill="#a65dfb"/>
<polygon points="1631.4,282.7 1661.7,355.0 1631.4,355.0" fill="#fbe600"/>
<rect x="1661.7" y="279.7" width="149.0" height="75.3" fill="#e8e8ea"/>
<rect x="1661.7" y="279.7" width="59.3" height="58.0" fill="#fbe600"/>
<circle cx="1691.3" cy="308.7" r="30.3" fill="#a65dfb"/>
<path d="M1721.0 278.7A30 30 0 0 1 1721.0 338.7Z" fill="#000"/>
<path d="M1751.2 278.7A29 30 0 0 1 1751.2 338.7Z" fill="#18e2f4"/>
<rect x="1661.7" y="337.7" width="118.7" height="17.3" fill="#a65dfb"/>
<polygon points="1780.4,282.7 1810.7,355.0 1780.4,355.0" fill="#fbe600"/>
<rect x="1810.7" y="279.7" width="149.0" height="75.3" fill="#e8e8ea"/>
<rect x="1810.7" y="279.7" width="59.3" height="58.0" fill="#fbe600"/>
<circle cx="1840.3" cy="308.7" r="30.3" fill="#a65dfb"/>
<path d="M1870.0 278.7A30 30 0 0 1 1870.0 338.7Z" fill="#000"/>
<path d="M1900.2 278.7A29 30 0 0 1 1900.2 338.7Z" fill="#18e2f4"/>
<rect x="1810.7" y="337.7" width="118.7" height="17.3" fill="#a65dfb"/>
<polygon points="1929.4,282.7 1959.7,355.0 1929.4,355.0" fill="#fbe600"/>
<rect x="1512.7" y="355.0" width="149.0" height="76.0" fill="#e8e8ea"/>
<rect x="1512.7" y="355.0" width="59.3" height="59.0" fill="#fbe600"/>
<circle cx="1542.3" cy="384.5" r="30.3" fill="#a65dfb"/>
<path d="M1572.0 354.5A30 30 0 0 1 1572.0 414.5Z" fill="#000"/>
<path d="M1602.2 354.5A29 30 0 0 1 1602.2 414.5Z" fill="#18e2f4"/>
<rect x="1512.7" y="414.0" width="118.7" height="17.0" fill="#a65dfb"/>
<polygon points="1631.4,358.0 1661.7,431.0 1631.4,431.0" fill="#fbe600"/>
<rect x="1661.7" y="355.0" width="149.0" height="76.0" fill="#e8e8ea"/>
<rect x="1661.7" y="355.0" width="59.3" height="59.0" fill="#fbe600"/>
<circle cx="1691.3" cy="384.5" r="30.3" fill="#a65dfb"/>
<path d="M1721.0 354.5A30 30 0 0 1 1721.0 414.5Z" fill="#000"/>
<path d="M1751.2 354.5A29 30 0 0 1 1751.2 414.5Z" fill="#18e2f4"/>
<rect x="1661.7" y="414.0" width="118.7" height="17.0" fill="#a65dfb"/>
<polygon points="1780.4,358.0 1810.7,431.0 1780.4,431.0" fill="#fbe600"/>
<rect x="1810.7" y="355.0" width="149.0" height="76.0" fill="#e8e8ea"/>
<rect x="1810.7" y="355.0" width="59.3" height="59.0" fill="#fbe600"/>
<circle cx="1840.3" cy="384.5" r="30.3" fill="#a65dfb"/>
<path d="M1870.0 354.5A30 30 0 0 1 1870.0 414.5Z" fill="#000"/>
<path d="M1900.2 354.5A29 30 0 0 1 1900.2 414.5Z" fill="#18e2f4"/>
<rect x="1810.7" y="414.0" width="118.7" height="17.0" fill="#a65dfb"/>
<polygon points="1929.4,358.0 1959.7,431.0 1929.4,431.0" fill="#fbe600"/>
</g>
<rect x="1350.1" y="410.5" width="276.3" height="194.9" fill="#a65dfb"/>
<rect x="1626.2" y="497.0" width="12.8" height="27.9" fill="#000"/>
<rect x="1639.0" y="497.0" width="11.8" height="27.9" fill="#e8e8ea"/>
<rect x="1626.2" y="524.9" width="12.8" height="26.8" fill="#e8e8ea"/>
<rect x="1639.0" y="524.9" width="11.8" height="26.8" fill="#000"/>
<rect x="1626.2" y="551.7" width="12.8" height="28.3" fill="#000"/>
<rect x="1639.0" y="551.7" width="11.8" height="28.3" fill="#e8e8ea"/>
<rect x="1626.2" y="580.0" width="12.8" height="25.4" fill="#e8e8ea"/>
<rect x="1639.0" y="580.0" width="11.8" height="25.4" fill="#000"/>
<rect x="1350.1" y="605.4" width="300.7" height="80.4" fill="#e8e8ea"/>
<g clip-path="url(#t1)">
<rect x="1202.7" y="605.0" width="107.6" height="81.2" fill="#e8e8ea"/>
<rect x="1210.7" y="605.0" width="60.3" height="81.2" fill="#fbe600"/>
<polygon points="1202.7,656.2 1210.7,678.2 1210.7,686.2 1202.7,686.2" fill="#fbe600"/>
<circle cx="1240.7" cy="628.8" r="29.6" fill="#a65dfb"/>
<rect x="1232.7" y="645.0" width="16.0" height="28.0" fill="#a65dfb"/>
<circle cx="1240.7" cy="702.5" r="30.0" fill="#a65dfb"/>
<path d="M1271.0 600.8A31 30 0 0 1 1271.0 660.8Z" fill="#000"/>
<path d="M1271.0 672.0A31 30 0 0 1 1271.0 732.0Z" fill="#000"/>
<rect x="1301.7" y="605.0" width="8.6" height="81.2" fill="#18e2f4"/>
<rect x="1210.7" y="657.6" width="99.6" height="14.7" fill="#a65dfb"/>
</g>
<g clip-path="url(#t2)">
<rect x="1352.4" y="605.0" width="107.6" height="81.2" fill="#e8e8ea"/>
<rect x="1360.4" y="605.0" width="60.3" height="81.2" fill="#fbe600"/>
<polygon points="1352.4,656.2 1360.4,678.2 1360.4,686.2 1352.4,686.2" fill="#fbe600"/>
<circle cx="1390.4" cy="628.8" r="29.6" fill="#a65dfb"/>
<rect x="1382.4" y="645.0" width="16.0" height="28.0" fill="#a65dfb"/>
<circle cx="1390.4" cy="702.5" r="30.0" fill="#a65dfb"/>
<path d="M1420.7 600.8A31 30 0 0 1 1420.7 660.8Z" fill="#000"/>
<path d="M1420.7 672.0A31 30 0 0 1 1420.7 732.0Z" fill="#000"/>
<rect x="1451.4" y="605.0" width="8.6" height="81.2" fill="#18e2f4"/>
<rect x="1360.4" y="657.6" width="99.6" height="14.7" fill="#a65dfb"/>
</g>
</svg>

<!-- menu bar -->
<div class="a" style="left:0;top:0;width:1920px;height:31px;background:#555555;border-bottom:1px solid #383838"></div>
<div class="a" style="left:0;top:0;width:33px;height:29px;background:#474747"></div>
<div class="a" style="left:8px;top:5px;width:18px;height:18px;background:#2a1500;border:1.5px solid #b0651e"></div>
<svg class="a" style="left:8px;top:5px" width="18" height="18"><path d="M4 8H14M4 8L8 4M4 8L8 12" stroke="#f0e0c8" stroke-width="1.6" fill="none"/></svg>
<svg class="a" style="left:39px;top:6px" width="20" height="18"><path d="M10 1L1 9H4V17H8V12H12V17H16V9H19Z" fill="#d8d8d8"/></svg>
<div class="a" style="left:72px;top:6px;width:1px;height:18px;background:#5e5e5e"></div>
<div class="t" style="left:88px;top:7px;font-size:13px;color:#e2e2e2">文件(F)</div>
<div class="t" style="left:141px;top:7px;font-size:13px;color:#e2e2e2">编辑(E)</div>
<div class="t" style="left:195px;top:7px;font-size:13px;color:#e2e2e2">对象(O)</div>
<div class="t" style="left:252px;top:7px;font-size:13px;color:#e2e2e2">文字(T)</div>
<div class="t" style="left:306px;top:7px;font-size:13px;color:#e2e2e2">选择(S)</div>
<div class="t" style="left:360px;top:7px;font-size:13px;color:#e2e2e2">效果(C)</div>
<div class="t" style="left:414px;top:7px;font-size:13px;color:#e2e2e2">视图(V)</div>
<div class="t" style="left:469px;top:7px;font-size:13px;color:#e2e2e2">窗口(W)</div>
<div class="t" style="left:529px;top:7px;font-size:13px;color:#e2e2e2">帮助(H)</div>
<svg class="a" style="left:595px;top:8px" width="40" height="14"><rect x="0" y="1" width="7" height="11" fill="#d0d0d0"/><rect x="9" y="1" width="8" height="5" fill="#d0d0d0"/><rect x="9" y="8" width="8" height="4" fill="#d0d0d0"/><path d="M26 5L29 8L32 5" stroke="#d0d0d0" stroke-width="1.5" fill="none"/></svg>
<div class="t" style="left:1627px;top:6px;font-size:13px;color:#e0e0e0">Web</div>
<svg class="a" style="left:1660px;top:10px" width="12" height="10"><path d="M2 3L6 7L10 3" stroke="#d0d0d0" stroke-width="1.5" fill="none"/></svg>
<div class="a" style="left:1696px;top:3px;width:128px;height:21px;background:#4c4c4c;border-radius:3px"></div>
<svg class="a" style="left:1698px;top:5px" width="22" height="16"><circle cx="9" cy="7" r="4.5" stroke="#d8d8d8" stroke-width="1.6" fill="none"/><path d="M6 10L2 14M14 11L16 13L18 11" stroke="#d8d8d8" stroke-width="1.5" fill="none"/></svg>
<div class="t" style="left:1722px;top:7px;font-size:11px;color:#6e6e6e;letter-spacing:1px">搜索 Adobe Stock</div>
<div class="a" style="left:1840px;top:11px;width:11px;height:2px;background:#d8d8d8"></div>
<svg class="a" style="left:1867px;top:4px" width="14" height="14"><path d="M4 1H12V9H9M2 4H9V12H2Z" stroke="#d8d8d8" stroke-width="1.5" fill="none"/></svg>
<svg class="a" style="left:1896px;top:4px" width="13" height="13"><path d="M1.5 1.5L11.5 11.5M11.5 1.5L1.5 11.5" stroke="#e0e0e0" stroke-width="1.8"/></svg>

<!-- control bar -->
<div class="a" style="left:0;top:31px;width:1920px;height:35px;background:#535353"></div>
<div class="a" style="left:3px;top:37px;width:3px;height:22px;background:#464646"></div>
<div class="t" style="left:15px;top:41px;font-size:11.5px;color:#9c9c9c">未选择对象</div>
<div class="a" style="left:109px;top:38px;width:19px;height:19px;background:#000;border:1.5px solid #e6e6e6"></div>
<div class="a" style="left:130px;top:37px;width:14px;height:21px;background:#474747"></div>
<svg class="a" style="left:131px;top:42px" width="12" height="10"><path d="M2 3L6 7L10 3" stroke="#e0e0e0" stroke-width="1.5" fill="none"/></svg>
<div class="a" style="left:153px;top:38px;width:19px;height:19px;background:#fff"></div>
<svg class="a" style="left:153px;top:38px" width="19" height="19"><path d="M1 18L18 1" stroke="#e02020" stroke-width="2"/><rect x="7" y="7" width="5" height="5" stroke="#222" stroke-width="0.9" fill="none"/></svg>
<div class="a" style="left:174px;top:37px;width:14px;height:21px;background:#474747"></div>
<svg class="a" style="left:175px;top:42px" width="12" height="10"><path d="M2 3L6 7L10 3" stroke="#e0e0e0" stroke-width="1.5" fill="none"/></svg>
<div class="t" style="left:203px;top:41px;font-size:12px;color:#d8d8d8;border-bottom:1px dotted #aaa;padding-bottom:1px">描边：</div>
<svg class="a" style="left:244px;top:38px" width="10" height="20"><path d="M2 6L5 2L8 6M2 13L5 17L8 13" stroke="#d8d8d8" stroke-width="1.4" fill="none"/></svg>
<div class="a" style="left:258px;top:37px;width:45px;height:21px;background:#484848"></div>
<div class="a" style="left:303px;top:37px;width:18px;height:21px;background:#4a4a4a"></div>
<svg class="a" style="left:305px;top:42px" width="12" height="10"><path d="M2 3L6 7L10 3" stroke="#e0e0e0" stroke-width="1.5" fill="none"/></svg>
<div class="a" style="left:327px;top:37px;width:90px;height:21px;background:#737373;border-radius:2px"></div>
<div class="a" style="left:441px;top:38px;width:86px;height:19px;background:#e3e3e3"></div>
<div class="a" style="left:450px;top:45px;width:5px;height:5px;border-radius:50%;background:#111"></div>
<div class="t" style="left:465px;top:42px;font-size:11px;color:#222">5&nbsp;&nbsp;点圆形</div>
<div class="a" style="left:528px;top:37px;width:17px;height:21px;background:#484848"></div>
<svg class="a" style="left:531px;top:42px" width="12" height="10"><path d="M2 3L6 7L10 3" stroke="#e0e0e0" stroke-width="1.5" fill="none"/></svg>
<div class="t" style="left:554px;top:41px;font-size:12px;color:#d8d8d8;border-bottom:1px dotted #aaa;padding-bottom:1px">不透明度：</div>
<div class="a" style="left:614px;top:37px;width:52px;height:21px;background:#4a4a4a"></div>
<div class="t" style="left:619px;top:41px;font-size:11px;color:#e6e6e6">100%</div>
<div class="a" style="left:666px;top:37px;width:20px;height:21px;background:#4a4a4a"></div>
<svg class="a" style="left:670px;top:42px" width="10" height="12"><path d="M3 2L7 6L3 10" stroke="#e0e0e0" stroke-width="1.5" fill="none"/></svg>
<div class="t" style="left:691px;top:41px;font-size:12px;color:#b8b8b8">样式：</div>
<div class="a" style="left:731px;top:38px;width:19px;height:19px;background:#e8e8e8"></div>
<svg class="a" style="left:753px;top:42px" width="12" height="10"><path d="M2 3L6 7L10 3" stroke="#e0e0e0" stroke-width="1.5" fill="none"/></svg>
<div class="t" style="left:783px;top:41px;font-size:12px;color:#d8d8d8;border-bottom:1px dotted #aaa;padding-bottom:1px">字符：</div>
<div class="a" style="left:821px;top:37px;width:173px;height:21px;background:#4a4a4a"></div>
<svg class="a" style="left:824px;top:40px" width="20" height="16"><circle cx="9" cy="6" r="4" stroke="#d0d0d0" stroke-width="1.4" fill="none"/><path d="M6 9L2 13M13 10L15 12L17 10" stroke="#d0d0d0" stroke-width="1.3" fill="none"/></svg>
<div class="t" style="left:847px;top:42px;font-size:11.5px;color:#e8e8e8;font-family:'Liberation Mono',monospace;letter-spacing:0.2px">Aileron</div>
<svg class="a" style="left:979px;top:42px" width="12" height="10"><path d="M2 3L6 7L10 3" stroke="#e0e0e0" stroke-width="1.5" fill="none"/></svg>
<div class="a" style="left:1003px;top:37px;width:70px;height:21px;background:#4a4a4a"></div>
<div class="t" style="left:1006px;top:42px;font-size:11.5px;color:#e8e8e8;font-family:'Liberation Mono',monospace">Bold</div>
<div class="a" style="left:1074px;top:37px;width:17px;height:21px;background:#4a4a4a"></div>
<svg class="a" style="left:1076px;top:42px" width="12" height="10"><path d="M2 3L6 7L10 3" stroke="#e0e0e0" stroke-width="1.5" fill="none"/></svg>
<svg class="a" style="left:1101px;top:38px" width="10" height="20"><path d="M2 6L5 2L8 6M2 13L5 17L8 13" stroke="#d8d8d8" stroke-width="1.4" fill="none"/></svg>
<div class="a" style="left:1115px;top:37px;width:44px;height:21px;background:#4a4a4a"></div>
<div class="t" style="left:1119px;top:41px;font-size:11.5px;color:#e8e8e8;font-family:'Liberation Mono',monospace;letter-spacing:-0.5px">196.97</div>
<svg class="a" style="left:1161px;top:42px" width="12" height="10"><path d="M2 3L6 7L10 3" stroke="#e0e0e0" stroke-width="1.5" fill="none"/></svg>
<div class="t" style="left:1185px;top:41px;font-size:12px;color:#d8d8d8;border-bottom:1px dotted #aaa;padding-bottom:1px">段落：</div>
<div class="a" style="left:1225px;top:36px;width:22px;height:22px;background:#2f2f2f"></div>
<svg class="a" style="left:1225px;top:36px" width="75" height="22"><path d="M4 6H18M4 9H15M4 12H18M4 15H15" stroke="#f0f0f0" stroke-width="1.3"/><path d="M27 6H43M29 9H41M27 12H43M29 15H41" stroke="#cfcfcf" stroke-width="1.2"/><path d="M51 6H67M54 9H67M51 12H67M54 15H67" stroke="#cfcfcf" stroke-width="1.2"/></svg>
<div class="a" style="left:1309px;top:37px;width:68px;height:21px;border:1px solid #686868;border-radius:2px"></div>
<div class="t" style="left:1319px;top:41px;font-size:12px;color:#e6e6e6">文档设置</div>
<div class="a" style="left:1383px;top:37px;width:68px;height:21px;border:1px solid #686868;border-radius:2px"></div>
<div class="t" style="left:1398px;top:41px;font-size:12px;color:#e6e6e6">首选项</div>
<svg class="a" style="left:1459px;top:38px" width="36" height="20"><path d="M2 6H7V13H2Z" stroke="#d0d0d0" stroke-width="1.2" fill="none"/><path d="M9 4L11 14L13 11L16 15" stroke="#d0d0d0" stroke-width="1.3" fill="none"/><rect x="10" y="2" width="5" height="5" stroke="#d0d0d0" stroke-width="1" fill="none"/><path d="M24 6L27 9L30 6" stroke="#d8d8d8" stroke-width="1.5" fill="none"/></svg>
<svg class="a" style="left:1814px;top:40px" width="90" height="16"><path d="M2 2H5M2 2V5M12 2H9M12 2V5M2 13H5M2 13V10M12 13H9M12 13V10" stroke="#707070" stroke-width="1.3"/><path d="M29 2V13M32 4H36Q39 4 39 7.5Q39 11 36 11H32" stroke="#d8d8d8" stroke-width="1.8" fill="none"/><path d="M49 6L52 9L55 6" stroke="#6a6a6a" stroke-width="1.3" fill="none"/><path d="M77 3H88M77 7H88M77 11H88M74 3H75M74 7H75M74 11H75" stroke="#d0d0d0" stroke-width="1.3"/></svg>

<!-- tab bar -->
<div class="a" style="left:42px;top:66px;width:1878px;height:27px;background:#424242"></div>
<div class="a" style="left:42px;top:67px;width:287px;height:26px;background:#535353"></div>
<div class="t" style="left:52px;top:73px;font-size:12.5px;color:#dcdcdc">29-图形图案.ai* @ 33.33% (RGB/GPU 预览)</div>
<svg class="a" style="left:315px;top:75px" width="9" height="9"><path d="M1 1L8 8M8 1L1 8" stroke="#e8e8e8" stroke-width="1.8"/></svg>
<!-- tools panel -->
<div class="a" style="left:0;top:64px;width:40px;height:976px;background:#535353;border-right:2px solid #444"></div>
<div class="a" style="left:0;top:64px;width:40px;height:13px;background:#4a4a4a"></div>
<svg class="a" style="left:0;top:64px" width="42" height="880">
<g fill="none" stroke="#d8d8d8" stroke-width="1.3">
<path d="M7 5L9 7.5L7 10M11 5L13 7.5L11 10" stroke-width="1.2"/>
</g>
<g transform="translate(0,-64)" fill="none" stroke="#d2d2d2" stroke-width="1.4">
<path d="M14 100.5L27 108L21 110L17 116Z"/>
<path d="M14 124L27 131.5L21 133.5L17 139.5Z" fill="#d2d2d2"/>
<path d="M14 165L24 152" stroke-width="2"/><path d="M25 148V151M22 150H28M16 150L18 152M26 156L28 158" stroke-width="1.1"/>
<path d="M23 175C20 172 14 173 14 177C14 181 19 182 21 180M21 180L19 186M18 178L26 183L21 185L23 189" />
<path d="M15 211L19 202L25 199L28 202L25 208Z M20 206L23 203" fill="#d2d2d2"/>
<path d="M13 233C13 227 15 224 18 226M17 233L21 224L26 221L29 224L26 230Z" fill="none"/>
<path d="M17 230L21 226L27 222" stroke-width="3"/>
<path d="M14 283L27 270" stroke-width="1.5"/>
<rect x="13" y="294" width="14" height="11" fill="#8a8a8a" stroke="#d2d2d2"/>
<path d="M14 333L21 324M21 324L27 317L29 319L23 326Z" fill="#d2d2d2" stroke-width="1.5"/>
<circle cx="18" cy="350" r="5.5" fill="#9a9a9a"/><path d="M22 353L29 344" stroke-width="2.5"/>
<path d="M13 376L21 368L28 373L21 380Z" fill="#d2d2d2"/><path d="M13 376L17 380H22" />
<path d="M13 391V401L19 396ZM22 396L28 391V401Z" /><path d="M20.5 389V403" stroke-width="0.8"/><path d="M22 396L28 391V401Z" fill="#d2d2d2"/>
<rect x="13" y="420" width="8" height="8"/><rect x="17" y="415" width="10" height="9"/><path d="M21 421L27 415" />
<path d="M13 440H28L25 444L28 448L25 452H13Z" fill="#d2d2d2"/>
<path d="M13 462H27V476H13Z" stroke-dasharray="3 2"/><path d="M16 466L24 472L20 473L19 477Z" fill="#d2d2d2"/>
<ellipse cx="19" cy="493" rx="6" ry="5"/><path d="M19 493L28 499L23 500L22 505Z" fill="#d2d2d2"/>
<path d="M14 510V524H28M14 510L28 524M14 517H21M20 510V524" stroke-width="1"/>
<rect x="13" y="533" width="14" height="14"/><path d="M13 540C18 538 22 542 27 540M20 533C18 538 22 542 20 547" stroke-width="1"/>
<rect x="13" y="557" width="14" height="14" fill="#888"/><rect x="20" y="557" width="7" height="14" fill="#ddd" stroke="none"/>
<path d="M14 596L23 585M21 583L27 589M24 580L30 586" stroke-width="1.8"/>
<rect x="13" y="606" width="9" height="8" fill="#d2d2d2"/><circle cx="23" cy="613" r="4" fill="#888"/><circle cx="27" cy="617" r="4"/>
<path d="M13 629H15M17 629H19M13 633H15M17 633H19M13 637H15" stroke-width="1.6"/><rect x="19" y="631" width="9" height="12" rx="1"/><circle cx="23.5" cy="637" r="2.5"/>
<path d="M14 652V668H28M17 667V660M21 667V655M25 667V658" stroke-width="2"/>
<path d="M14 680H17V677M17 683V692H28V683Z" stroke-width="1.3"/>
<path d="M14 716L24 704L28 708L18 718Z M14 716L13 719" />
<path d="M15 735C13 730 14 727 16 728V724C16 722 19 722 19 724V730M19 724V722C19 720 22 720 22 722V730M22 724C22 722 25 722 25 724V731M25 728C26 726 28 727 28 729C27 735 24 740 19 740C17 740 16 738 15 735Z" fill="#d2d2d2" stroke-width="0.8"/>
<circle cx="18" cy="754" r="5.5" stroke-width="1.6"/><path d="M22 758L28 764" stroke-width="2"/>
</g>
<g fill="#d2d2d2">
<path d="M31 147h3v-3zM31 171h3v-3zM31 219h3v-3zM31 195h3v-3zM31 243h3v-3zM31 267h3v-3zM31 291h3v-3zM31 315h3v-3zM31 339h3v-3zM31 363h3v-3zM31 387h3v-3zM31 411h3v-3zM31 435h3v-3zM31 459h3v-3zM31 483h3v-3zM31 507h3v-3zM31 531h3v-3zM31 555h3v-3zM31 579h3v-3zM31 603h3v-3zM31 627h3v-3zM31 651h3v-3zM31 675h3v-3z" transform="translate(0,-64)"/>
</g>
</svg>
<div class="a" style="left:6px;top:236px;width:28px;height:26px;background:#2c2c2c;border-radius:3px"></div>
<div class="t" style="left:11px;top:239px;font-size:20px;color:#eee;font-family:'Liberation Serif',serif;font-weight:bold">T</div>
<svg class="a" style="left:0;top:770px" width="42" height="150">
<g transform="translate(0,-770)">
<rect x="7" y="776" width="7" height="7" fill="#000" stroke="#eee" stroke-width="1"/><rect x="10" y="779" width="6" height="6" fill="none" stroke="#eee" stroke-width="1"/>
<path d="M27 777Q32 777 32 783M30 781L32 784L34 781M27 777L29 775M27 777L29 779" fill="none" stroke="#ddd" stroke-width="1.2"/>
<rect x="17" y="805" width="17" height="17" fill="#fff"/><path d="M18 821L33 806" stroke="#e02020" stroke-width="2"/><rect x="21" y="809" width="9" height="9" fill="none" stroke="#333" stroke-width="0"/>
<rect x="21" y="809" width="9" height="9" fill="#535353"/><path d="M21 818L30 809" stroke="#e02020" stroke-width="1.8"/>
<rect x="6" y="794" width="17" height="17" fill="#000" stroke="#eee" stroke-width="1.4"/>
<rect x="7" y="829" width="7" height="8" fill="#000"/><rect x="15" y="829" width="7" height="8" fill="url(#gg)"/><rect x="23" y="829" width="8" height="8" fill="#fff"/><path d="M23 837L31 829" stroke="#e02020" stroke-width="1.6"/>
<defs><linearGradient id="gg"><stop offset="0" stop-color="#fff"/><stop offset="1" stop-color="#000"/></linearGradient></defs>
<circle cx="18" cy="852" r="3.5" fill="#ccc"/><rect x="19" y="852" width="6" height="5" fill="#ccc" stroke="#535353" stroke-width="1"/>
<rect x="11" y="873" width="12" height="8" fill="none" stroke="#d2d2d2" stroke-width="1.2"/><rect x="16" y="870" width="13" height="9" fill="#535353" stroke="#d2d2d2" stroke-width="1.2"/>
<circle cx="14" cy="910" r="1.6" fill="#e0e0e0"/><circle cx="20" cy="910" r="1.6" fill="#e0e0e0"/><circle cx="26" cy="910" r="1.6" fill="#e0e0e0"/>
</g>
</svg>
<!-- scrollbar right -->
<div class="a" style="left:1903px;top:93px;width:17px;height:947px;background:#4a4a4a"></div>
<div class="a" style="left:1905px;top:601px;width:13px;height:25px;background:#5b5b5b;border-radius:3px"></div>
<svg class="a" style="left:1905px;top:97px" width="13" height="10"><path d="M2 7L6.5 3L11 7" stroke="#8a8a8a" stroke-width="1.8" fill="none"/></svg>

<!-- swatches panel -->
<div class="a" style="left:1626px;top:288px;width:254px;height:211px;background:#575757;border:1px solid #404040"></div>
<div class="a" style="left:1627px;top:289px;width:252px;height:14px;background:#4a4a4a"></div>
<div class="a" style="left:1627px;top:303px;width:252px;height:25px;background:#4a4a4a"></div>
<div class="a" style="left:1628px;top:303px;width:41px;height:25px;background:#575757;border-radius:2px 2px 0 0"></div>
<svg class="a" style="left:1626px;top:288px" width="254" height="211">
<defs><linearGradient id="sgw"><stop offset="0" stop-color="#fff"/><stop offset="1" stop-color="#000"/></linearGradient><linearGradient id="sgy"><stop offset="0" stop-color="#ffe400"/><stop offset="1" stop-color="#f7941d"/></linearGradient></defs>
<path d="M228 5L225 8L228 11ZM232 5L229 8L232 11Z" stroke="#d8d8d8" stroke-width="1" fill="#d8d8d8"/>
<path d="M243 5L249 11M249 5L243 11" stroke="#e0e0e0" stroke-width="1.8"/>
<path d="M237 25H247M237 28H247M237 31H247" stroke="#b8b8b8" stroke-width="1.1"/>
<rect x="17" y="57" width="17" height="17" fill="#fff"/><path d="M18 73L33 58" stroke="#e02020" stroke-width="2"/><rect x="21" y="61" width="9" height="9" fill="#575757"/><path d="M21 70L30 61" stroke="#e02020" stroke-width="1.8"/>
<rect x="7" y="48" width="17" height="17" fill="#000" stroke="#eee" stroke-width="1.4"/>
<path d="M205 53H218M205 57H218M205 61H218M205 65H218" stroke="#d8d8d8" stroke-width="1.5"/>
<rect x="225" y="49" width="22" height="20" fill="#383838"/>
<g fill="#f0f0f0"><rect x="229" y="52" width="4" height="4"/><rect x="234.5" y="52" width="4" height="4"/><rect x="240" y="52" width="4" height="4"/><rect x="229" y="57.5" width="4" height="4"/><rect x="234.5" y="57.5" width="4" height="4"/><rect x="240" y="57.5" width="4" height="4"/><rect x="229" y="63" width="4" height="4"/><rect x="234.5" y="63" width="4" height="4"/><rect x="240" y="63" width="4" height="4"/></g>
<rect x="6.4" y="82.5" width="13.2" height="13" fill="#fff"/><path d="M7.4 94.5L18.6 83.5" stroke="#e02020" stroke-width="1.3"/>
<rect x="20.4" y="82.5" width="13.2" height="13" fill="#e8e8e8"/><circle cx="27.0" cy="89.0" r="4" fill="none" stroke="#444" stroke-width="0.8"/><path d="M27.0 83.5V94.5M21.4 89.0H32.4" stroke="#444" stroke-width="0.7"/>
<rect x="34.3" y="82.5" width="13.2" height="13" fill="#ffffff"/>
<rect x="48.2" y="82.5" width="13.2" height="13" fill="#231f20"/>
<rect x="62.2" y="82.5" width="13.2" height="13" fill="#ed1c24"/>
<rect x="76.2" y="82.5" width="13.2" height="13" fill="#fff200"/>
<rect x="90.1" y="82.5" width="13.2" height="13" fill="#00a651"/>
<rect x="104.0" y="82.5" width="13.2" height="13" fill="#00aeef"/>
<rect x="118.0" y="82.5" width="13.2" height="13" fill="#2e3192"/>
<rect x="131.9" y="82.5" width="13.2" height="13" fill="#ec008c"/>
<rect x="145.9" y="82.5" width="13.2" height="13" fill="#d2232a"/>
<rect x="159.8" y="82.5" width="13.2" height="13" fill="#f15a24"/>
<rect x="173.8" y="82.5" width="13.2" height="13" fill="#f7941d"/>
<rect x="187.8" y="82.5" width="13.2" height="13" fill="#fbb040"/>
<rect x="201.7" y="82.5" width="13.2" height="13" fill="#fcc10f"/>
<rect x="215.7" y="82.5" width="13.2" height="13" fill="#f9e11e"/>
<rect x="6.4" y="96.7" width="13.2" height="13" fill="#d7df23"/>
<rect x="20.4" y="96.7" width="13.2" height="13" fill="#a5b83b"/>
<rect x="34.3" y="96.7" width="13.2" height="13" fill="#39b54a"/>
<rect x="48.2" y="96.7" width="13.2" height="13" fill="#009444"/>
<rect x="62.2" y="96.7" width="13.2" height="13" fill="#006838"/>
<rect x="76.2" y="96.7" width="13.2" height="13" fill="#00a79d"/>
<rect x="90.1" y="96.7" width="13.2" height="13" fill="#1ba5b8"/>
<rect x="104.0" y="96.7" width="13.2" height="13" fill="#27aae1"/>
<rect x="118.0" y="96.7" width="13.2" height="13" fill="#1c75bc"/>
<rect x="131.9" y="96.7" width="13.2" height="13" fill="#2b3990"/>
<rect x="145.9" y="96.7" width="13.2" height="13" fill="#262262"/>
<rect x="159.8" y="96.7" width="13.2" height="13" fill="#662d91"/>
<rect x="173.8" y="96.7" width="13.2" height="13" fill="#92278f"/>
<rect x="187.8" y="96.7" width="13.2" height="13" fill="#9e1f63"/>
<rect x="201.7" y="96.7" width="13.2" height="13" fill="#da1c5c"/>
<rect x="215.7" y="96.7" width="13.2" height="13" fill="#ee2a7b"/>
<rect x="6.4" y="110.8" width="13.2" height="13" fill="#c7b299"/>
<rect x="20.4" y="110.8" width="13.2" height="13" fill="#b09a80"/>
<rect x="34.3" y="110.8" width="13.2" height="13" fill="#998675"/>
<rect x="48.2" y="110.8" width="13.2" height="13" fill="#736357"/>
<rect x="62.2" y="110.8" width="13.2" height="13" fill="#c69c6d"/>
<rect x="76.2" y="110.8" width="13.2" height="13" fill="#a67c52"/>
<rect x="90.1" y="110.8" width="13.2" height="13" fill="#8c6239"/>
<rect x="104.0" y="110.8" width="13.2" height="13" fill="#754c24"/>
<rect x="118.0" y="110.8" width="13.2" height="13" fill="#7a4010"/>
<rect x="131.9" y="110.8" width="13.2" height="13" fill="#5a2e10"/>
<rect x="145.9" y="110.8" width="13.2" height="13" fill="url(#sgw)"/>
<rect x="159.8" y="110.8" width="13.2" height="13" fill="url(#sgy)"/>
<rect x="173.8" y="110.8" width="13.2" height="13" fill="#5aa8e0"/><path d="M173.8 114.8h13M173.8 119.8h13" stroke="#cde" stroke-width="1.5"/>
<rect x="187.8" y="110.8" width="13.2" height="13" fill="#111"/><circle cx="194.3" cy="117.3" r="4.5" fill="#eee"/>
<rect x="201.7" y="110.8" width="13.2" height="13" fill="#7ab830"/><circle cx="208.3" cy="117.3" r="3.5" fill="#2d6a10"/>
<rect x="215.7" y="110.8" width="13.2" height="13" fill="#b08a60"/><path d="M217.7 112.8l9 9M226.7 112.8l-9 9" stroke="#e8d8b0" stroke-width="1.2"/>
<rect x="6.4" y="124.5" width="13.2" height="13" fill="#f0f0f0"/><rect x="8" y="128" width="10" height="6" fill="#4a8a8a"/><rect x="20.35" y="124.5" width="13.2" height="13" fill="#f4f0f4"/><path d="M22 126l9.5 10M31.5 126l-9.5 10" stroke="#d04080" stroke-width="1.6"/><circle cx="27" cy="131" r="2" fill="#fff"/><rect x="34.3" y="124.5" width="13.2" height="13" fill="#fff"/><path d="M34.8 131l6.1-6.1 6.1 6.1-6.1 6.1z" fill="#000"/><rect x="48.25" y="124.5" width="13.2" height="13" fill="#5cc6c0"/><path d="M48.5 128l3 2 3-2 3 2 3-2M48.5 134l3 2 3-2 3 2 3-2" stroke="#1a3a40" stroke-width="1.8" fill="none"/><rect x="62.2" y="124.5" width="13.2" height="13" fill="#a0e0d0"/><rect x="62.2" y="124.5" width="4" height="13" fill="#8040d0"/><rect x="69" y="128" width="3" height="3" fill="#000"/><rect x="69" y="134" width="3" height="3" fill="#000"/><rect x="76.15" y="124.5" width="13.2" height="13" fill="#fff"/><rect x="76.15" y="124.5" width="6" height="13" fill="#50c8b0"/><rect x="82.5" y="124.5" width="3.3" height="3.3" fill="#000"/><rect x="85.8" y="127.8" width="3.3" height="3.3" fill="#000"/><rect x="82.5" y="131.1" width="3.3" height="3.3" fill="#000"/><rect x="85.8" y="134.4" width="3.3" height="3.1" fill="#000"/>
<path d="M7.4 144H11.4L12.4 145.5H18.4V152H7.4Z" fill="#bdbdbd"/>
<rect x="20.4" y="141" width="13.2" height="13" fill="#231f20"/>
<rect x="34.3" y="141" width="13.2" height="13" fill="#414042"/>
<rect x="48.2" y="141" width="13.2" height="13" fill="#58595b"/>
<rect x="62.2" y="141" width="13.2" height="13" fill="#6d6e71"/>
<rect x="76.2" y="141" width="13.2" height="13" fill="#808285"/>
<rect x="90.1" y="141" width="13.2" height="13" fill="#939598"/>
<rect x="104.0" y="141" width="13.2" height="13" fill="#a7a9ac"/>
<rect x="118.0" y="141" width="13.2" height="13" fill="#bcbec0"/>
<rect x="131.9" y="141" width="13.2" height="13" fill="#d1d3d4"/>
<rect x="145.9" y="141" width="13.2" height="13" fill="#e6e7e8"/>
<rect x="159.8" y="141" width="13.2" height="13" fill="#f1f2f2"/>
<path d="M7.4 159.4H11.4L12.4 160.9H18.4V167.4H7.4Z" fill="#bdbdbd"/>
<rect x="20.4" y="156.4" width="13.2" height="13" fill="#ed1c24"/>
<rect x="34.3" y="156.4" width="13.2" height="13" fill="#f26522"/>
<rect x="48.2" y="156.4" width="13.2" height="13" fill="#fff200"/>
<rect x="62.2" y="156.4" width="13.2" height="13" fill="#00a651"/>
<rect x="76.2" y="156.4" width="13.2" height="13" fill="#0054a6"/>
<rect x="90.1" y="156.4" width="13.2" height="13" fill="#662d91"/>
<g fill="none" stroke="#cfcfcf" stroke-width="1.4">
<path d="M12 192V204M15 192V204M18 193L23 204M25 202H27"/>
<circle cx="44" cy="198" r="4"/><path d="M40 194L48 202M44 192V194"/>
<path d="M66 192H74V204M68 196V204" stroke="#6a6a6a"/>
<rect x="110" y="192" width="13" height="11"/><path d="M110 196H123M114 192V203M118 192V203M125 204H127"/>
<rect x="137" y="192" width="12" height="12" stroke="#626262"/>
<path d="M160 194H166L168 196H175V205H160Z" fill="#cfcfcf"/>
<path d="M190 192H200V204H188V194Z M193 198H197" fill="#cfcfcf"/>
<path d="M219 194V205H227V194M217 194H229" stroke="#626262"/>
</g>
</svg>
<div class="t" style="left:1637px;top:309px;font-size:12.5px;color:#e6e6e6">色板</div>
<div class="t" style="left:1678px;top:309px;font-size:12.5px;color:#999">颜色参考</div>

<!-- pathfinder panel -->
<div class="a" style="left:1662px;top:841px;width:232px;height:150px;background:#575757;border:1px solid #404040"></div>
<div class="a" style="left:1663px;top:842px;width:230px;height:13px;background:#454545"></div>
<div class="a" style="left:1663px;top:855px;width:230px;height:25px;background:#454545"></div>
<div class="a" style="left:1664px;top:855px;width:79px;height:25px;background:#575757;border-radius:2px 2px 0 0"></div>
<div class="t" style="left:1672px;top:862px;font-size:12.5px;color:#e6e6e6">路径查找器</div>
<div class="t" style="left:1668px;top:890px;font-size:11.5px;color:#a8a8a8">形状模式：</div>
<div class="t" style="left:1668px;top:941px;font-size:11.5px;color:#a8a8a8">路径查找器：</div>
<svg class="a" style="left:1662px;top:841px" width="232" height="150">
<path d="M198 5L195 8L198 11ZM202 5L199 8L202 11Z" stroke="#d8d8d8" stroke-width="1" fill="#d8d8d8"/>
<path d="M219 5L225 11M225 5L219 11" stroke="#e0e0e0" stroke-width="1.8"/>
<path d="M215 25H225M215 28H225M215 31H225" stroke="#b8b8b8" stroke-width="1.1"/>
<g fill="#cfcfcf" stroke="#cfcfcf" stroke-width="1.2">
<rect x="12" y="72" width="9" height="9"/><rect x="16" y="76" width="9" height="9"/>
<rect x="48" y="72" width="9" height="9"/><rect x="52" y="76" width="9" height="9" fill="#535353"/>
<rect x="84" y="72" width="9" height="9" fill="none"/><rect x="88" y="76" width="9" height="9" fill="none"/><rect x="88" y="76" width="5" height="5"/>
<rect x="121" y="72" width="9" height="9"/><rect x="125" y="76" width="9" height="9"/><rect x="125" y="76" width="5" height="5" fill="#535353"/>
<rect x="178" y="75" width="22" height="12" fill="#5a5a5a" stroke="none"/>
<rect x="15" y="123" width="9" height="9" fill="none"/><rect x="19" y="127" width="9" height="9" fill="none"/><rect x="19" y="127" width="5" height="5"/>
<rect x="52" y="123" width="9" height="9" fill="none"/><rect x="56" y="127" width="9" height="9"/>
<rect x="88" y="123" width="9" height="9"/><rect x="92" y="127" width="9" height="9"/>
<rect x="126" y="123" width="9" height="9" fill="none" stroke="#8a8a8a"/><rect x="130" y="127" width="9" height="9" fill="none"/><rect x="130" y="127" width="5" height="5"/>
<rect x="163" y="123" width="9" height="9" fill="none"/><rect x="167" y="127" width="9" height="9" fill="none"/>
<rect x="202" y="123" width="9" height="9" fill="none"/><rect x="206" y="127" width="9" height="9"/>
</g>
</svg>

<!-- bottom gradient overlay -->
<div class="a" style="left:0;top:925px;width:1920px;height:96px;background:linear-gradient(to bottom,rgba(0,0,0,0) 0%,rgba(0,0,0,0.1) 30%,rgba(0,0,0,0.3) 70%,rgba(0,0,0,0.4) 78%,rgba(0,0,0,0.4) 100%)"></div>
<div class="a" style="left:0;top:1021px;width:1920px;height:18px;background:#2a2a2a"></div>
<div class="t" style="left:49px;top:1026px;font-size:12px;color:#6a6a6a">33.33%</div>
<svg class="a" style="left:95px;top:1024px" width="400" height="16">
<g stroke="#5c5c5c" fill="#5c5c5c" stroke-width="1.1">
<path d="M6 6L9 9L12 6" fill="none"/>
<path d="M30 3V13M39 3L32 8L39 13Z"/>
<path d="M52 3L45 8L52 13Z"/>
<path d="M107 6L110 9L113 6" fill="none"/>
<path d="M128 3L135 8L128 13Z"/>
<path d="M144 3L151 8L144 13ZM152 3V13"/>
<path d="M370 3L377 8L370 13Z"/>
<path d="M390 4L386 8L390 12" fill="none"/>
</g>
</svg>
<div class="t" style="left:158px;top:1026px;font-size:12px;color:#5c5c5c">5</div>
<div class="t" style="left:343px;top:1025px;font-size:12px;color:#858585">画板</div>

<!-- progress bar -->
<div class="a" style="left:18px;top:996px;width:1619px;height:3px;background:#4f9fe0"></div>
<div class="a" style="left:1637px;top:997px;width:266px;height:1px;background:#6a6a6a"></div>
<div class="a" style="left:1629px;top:989px;width:16px;height:16px;border-radius:50%;border:1.8px solid #5aa8ea;background:#3a3a3a"></div>
<div class="t" style="left:18px;top:1008px;font-size:10px;color:#f0f0f0;letter-spacing:-0.3px">0:19:38</div>
<div class="t" style="left:1873px;top:1008px;font-size:10px;color:#f0f0f0;letter-spacing:-0.3px">0:03:08</div>

<!-- taskbar -->
<div class="a" style="left:0;top:1039px;width:1920px;height:41px;background:#0d0d0d"></div>
<div class="a" style="left:199px;top:1038px;width:43px;height:42px;background:#151515"></div>
<div class="a" style="left:244px;top:1038px;width:47px;height:42px;background:#1c1c1c"></div>
<div class="a" style="left:244px;top:1078px;width:47px;height:2px;background:#7d98a8"></div>
<div class="a" style="left:199px;top:1078px;width:43px;height:2px;background:#6a7a88"></div>
<svg class="a" style="left:0;top:1038px" width="300" height="42">
<g fill="#9a9a9a"><path d="M16 16L23 15V22H16ZM24 15L32 14V22H24ZM16 23H23V30L16 29ZM24 23H32V31L24 30Z"/></g>
<circle cx="75" cy="20" r="5.5" fill="none" stroke="#9a9a9a" stroke-width="1.5"/><path d="M71 24L65 30" stroke="#9a9a9a" stroke-width="1.6"/>
<circle cx="120" cy="21.5" r="7" fill="none" stroke="#b0b0b0" stroke-width="1.6"/>
<path d="M161 15H171M161 28H171M162 15V28M170 15V28M174 15V17M174 20V23M174 26V28" stroke="#9a9a9a" stroke-width="1.5" fill="none"/>
<circle cx="219" cy="21.5" r="11" fill="none" stroke="#b0b0b0" stroke-width="1.4"/><circle cx="219" cy="21.5" r="7.5" fill="#a81616"/>
<rect x="257" y="11.5" width="19" height="18" fill="#240c00" stroke="#7a3a10" stroke-width="1.1"/>
<text x="260.5" y="24.5" font-family="Liberation Sans" font-size="10.5" fill="#a85a28">Ai</text>
</svg>
<svg class="a" style="left:20px;top:1026px" width="70" height="24">
<path d="M9 8H12L16 4V19L12 15H9Z" fill="none" stroke="#f0f0f0" stroke-width="1.5"/>
<path d="M19 8Q21 11.5 19 15M22 6Q25.5 11.5 22 17" fill="none" stroke="#f0f0f0" stroke-width="1.5"/>
<rect x="47" y="5" width="15" height="11" fill="none" stroke="#f0f0f0" stroke-width="1.5"/><path d="M49 9H60M49 12H60" stroke="#f0f0f0" stroke-width="1.2"/><path d="M49 16L48 20L52 16" fill="#f0f0f0" stroke="#f0f0f0"/>
</svg>
<svg class="a" style="left:908px;top:1027px" width="100" height="26">
<path d="M8 7A7 7 0 1 1 7 14" fill="none" stroke="#f0f0f0" stroke-width="1.5"/><path d="M9 3L6 7L10 9" fill="none" stroke="#f0f0f0" stroke-width="1.4"/>
<text x="9.5" y="17" font-family="Liberation Sans" font-size="8" fill="#f0f0f0">10</text>
<rect x="48" y="6" width="1.8" height="12" fill="#f0f0f0"/><rect x="53" y="6" width="1.8" height="12" fill="#f0f0f0"/>
<path d="M92 7A7 7 0 1 0 93 14" fill="none" stroke="#f0f0f0" stroke-width="1.5"/><path d="M91 3L94 7L90 9" fill="none" stroke="#f0f0f0" stroke-width="1.4"/>
<text x="82" y="17" font-family="Liberation Sans" font-size="8" fill="#f0f0f0">30</text>
</svg>
<svg class="a" style="left:1755px;top:1024px" width="145" height="30">
<path d="M7 21L9 15L20 4L24 8L13 19Z" fill="none" stroke="#f0f0f0" stroke-width="1.5"/>
<rect x="44" y="10" width="15" height="10" fill="none" stroke="#f0f0f0" stroke-width="1.5"/><rect x="51" y="14" width="6" height="4" fill="#f0f0f0"/>
<path d="M89 4L83 10M83 5V10H88M73 20L79 14M74 14H79V19" fill="none" stroke="#f0f0f0" stroke-width="1.4"/>
<circle cx="120" cy="14" r="1.2" fill="#f0f0f0"/><circle cx="126" cy="14" r="1.2" fill="#f0f0f0"/><circle cx="132" cy="14" r="1.2" fill="#f0f0f0"/>
</svg>
<svg class="a" style="left:1535px;top:1040px" width="385" height="40">
<g fill="none" stroke="#8a8a8a" stroke-width="1.3">
<circle cx="20" cy="12" r="3"/><circle cx="13" cy="16" r="3"/><path d="M8 28Q13 19 18 28M15 25Q20 16 25 23"/>
<path d="M48 22L53 17L58 22"/>
<path d="M97 18H113V27H97ZM105 27V30M101 30H109M94 16V26"/>
<path d="M118 19H121L125 15V29L121 25H118Z"/><path d="M128 18Q130 22 128 26M131 16Q134 22 131 28"/>
<path d="M147 28Q155 10 159 16Q161 24 151 28M151 22L157 25"/>
<rect x="173" y="16" width="22" height="11"/><path d="M177 20H191M177 24H191" stroke-dasharray="2 1"/>
<path d="M211 15V30M204 19H218V25H204Z" stroke-width="1.6"/>
<path d="M235 15H248M238 15V30M242 15V30M246 15V30M235 21H248M235 27H248" stroke-width="1.3"/>
<path d="M341 14H354V24H348L344 28V24H341ZM344 17H351M344 20H351"/>
</g>
<ellipse cx="77" cy="21" rx="6" ry="7" fill="#3a2a2a"/><path d="M72 23H82V27H72Z" fill="#b02020"/><circle cx="77" cy="17" r="3" fill="#ddd"/>
<text x="283" y="19" font-family="Liberation Sans" font-size="12.5" fill="#8a8a8a">7:17</text>
<text x="266" y="35" font-family="Liberation Sans" font-size="12.5" fill="#8a8a8a">2022/10/6</text>
<circle cx="356" cy="29" r="6" fill="#222" stroke="#8a8a8a" stroke-width="1"/><text x="353" y="33" font-family="Liberation Sans" font-size="9" fill="#aaa">1</text>
</svg>
</body></html>
